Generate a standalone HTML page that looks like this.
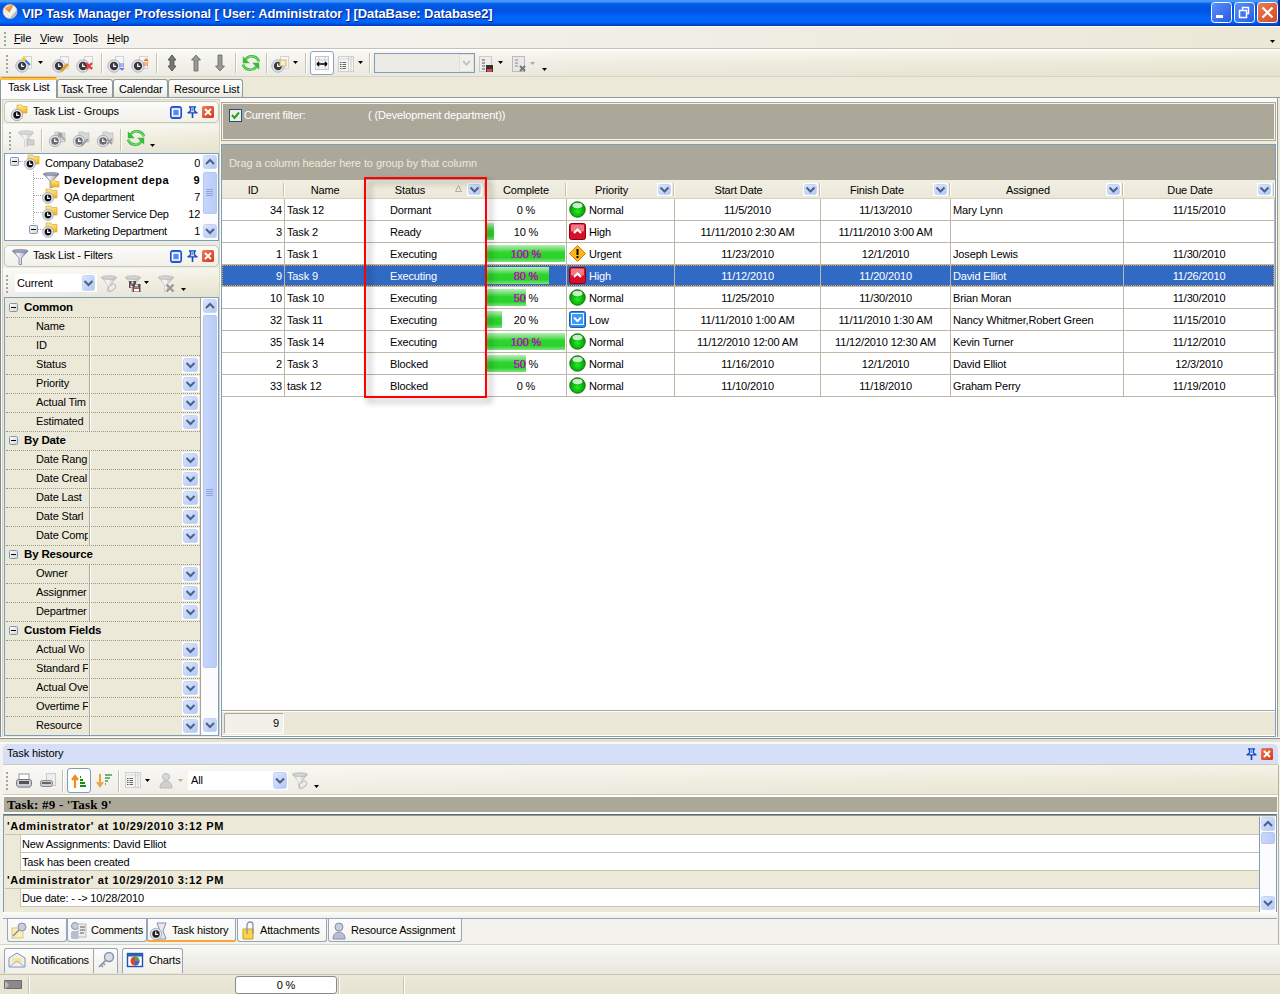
<!DOCTYPE html><html><head><meta charset="utf-8"><style>
html,body{margin:0;padding:0;}
body{width:1280px;height:994px;position:relative;overflow:hidden;background:#ece9d8;font-family:"Liberation Sans", sans-serif;font-size:11px;color:#000;letter-spacing:-0.15px;}
div{box-sizing:border-box;}
.t{position:absolute;white-space:nowrap;line-height:13px;}
</style></head><body>
<svg width="0" height="0" style="position:absolute"><defs><linearGradient id="ggray" x1="0" y1="0" x2="1" y2="0"><stop offset="0" stop-color="#c8c8c8"/><stop offset="0.4" stop-color="#f8f8f8"/><stop offset="1" stop-color="#b0b0b0"/></linearGradient><linearGradient id="gfold" x1="0" y1="0" x2="0" y2="1"><stop offset="0" stop-color="#fde9a8"/><stop offset="0.5" stop-color="#f8d050"/><stop offset="1" stop-color="#eeb018"/></linearGradient></defs></svg>
<div style="position:absolute;left:0px;top:0px;width:1280px;height:26px;background:linear-gradient(#4898f8 0,#4494f8 2px,#0a6af6 3px,#005ae2 5px,#0054e0 9px,#0058e8 13px,#0064f6 17px,#0066fa 22px,#0050dc 24px,#0036bc 26px)"></div>
<div style="position:absolute;left:1278px;top:0px;width:2px;height:26px;background:#0030a0"></div>
<svg style="position:absolute;left:3px;top:4px;overflow:visible" width="16" height="16"><defs><linearGradient id="apo" x1="0" y1="0" x2="0.6" y2="1"><stop offset="0" stop-color="#f8c890"/><stop offset="1" stop-color="#e07810"/></linearGradient></defs><circle cx="7" cy="7.5" r="7" fill="#f2f2f2" stroke="#f0c088" stroke-width="0.7"/><path d="M1.5 4.5Q5 0 10.5 1.2L6.5 8.5z" fill="url(#apo)"/><path d="M13.8 6A7 7 0 0 1 8 14.5L7 14z" fill="#b8b8b8"/><path d="M1 5.5L6.5 13.5" stroke="#d8d8d8" stroke-width="0.8"/></svg>
<div style="position:absolute;left:22px;top:6px;white-space:nowrap;font-weight:bold;font-size:13px;color:#fff;text-shadow:1px 1px 0 #0a1e7a;line-height:16px;letter-spacing:-0.09px;">VIP Task Manager Professional [ User: Administrator ] [DataBase: Database2]</div>
<svg style="position:absolute;left:1211px;top:2px;overflow:visible" width="21" height="21"><defs><linearGradient id="cap1211" x1="0" y1="0" x2="1" y2="1"><stop offset="0" stop-color="#5b92fc"/><stop offset="1" stop-color="#2559e4"/></linearGradient></defs><rect x="0.5" y="0.5" width="20" height="20" rx="3" fill="url(#cap1211)" stroke="#fff"/><rect x="5" y="13" width="7" height="3" fill="#fff"/></svg>
<svg style="position:absolute;left:1234px;top:2px;overflow:visible" width="21" height="21"><defs><linearGradient id="cap1234" x1="0" y1="0" x2="1" y2="1"><stop offset="0" stop-color="#5b92fc"/><stop offset="1" stop-color="#2559e4"/></linearGradient></defs><rect x="0.5" y="0.5" width="20" height="20" rx="3" fill="url(#cap1234)" stroke="#fff"/><rect x="5.5" y="8.5" width="7" height="7" fill="none" stroke="#fff" stroke-width="1.5"/><path d="M8.5 8.5V5.5H14.5V11.5H12.5" fill="none" stroke="#fff" stroke-width="1.5"/></svg>
<svg style="position:absolute;left:1257px;top:2px;overflow:visible" width="21" height="21"><defs><linearGradient id="cap1257" x1="0" y1="0" x2="1" y2="1"><stop offset="0" stop-color="#e97d5c"/><stop offset="1" stop-color="#d44a1c"/></linearGradient></defs><rect x="0.5" y="0.5" width="20" height="20" rx="3" fill="url(#cap1257)" stroke="#fff"/><path d="M5.5 5.5L15.5 15.5M15.5 5.5L5.5 15.5" stroke="#fff" stroke-width="2.2"/></svg>
<div style="position:absolute;left:0px;top:26px;width:1280px;height:22px;background:linear-gradient(90deg,#f4f3ee 0,#f1f0e9 40%,#ece8d7 100%)"></div>
<div style="position:absolute;left:0px;top:26px;width:1280px;height:1px;background:#fffcf0"></div>
<div style="position:absolute;left:0px;top:48px;width:1280px;height:1px;background:#c5c2b2"></div>
<svg style="position:absolute;left:4px;top:32px;overflow:visible" width="3" height="16"><rect x="0" y="0" width="2" height="2" fill="#a8a698"/><rect x="0" y="4" width="2" height="2" fill="#a8a698"/><rect x="0" y="8" width="2" height="2" fill="#a8a698"/><rect x="0" y="12" width="2" height="2" fill="#a8a698"/></svg>
<div style="position:absolute;left:14px;top:32px;white-space:nowrap;line-height:13px;"><u>F</u>ile</div>
<div style="position:absolute;left:40px;top:32px;white-space:nowrap;line-height:13px;"><u>V</u>iew</div>
<div style="position:absolute;left:73px;top:32px;white-space:nowrap;line-height:13px;"><u>T</u>ools</div>
<div style="position:absolute;left:107px;top:32px;white-space:nowrap;line-height:13px;"><u>H</u>elp</div>
<svg style="position:absolute;left:1270px;top:40px;overflow:visible" width="6" height="4"><path d="M0 0h5l-2.5 3z" fill="#000"/></svg>
<div style="position:absolute;left:0px;top:49px;width:1280px;height:28px;background:linear-gradient(#fff 0,#fff 1px,rgba(255,255,255,0.5) 2px,rgba(255,255,255,0) 50%,rgba(0,0,0,0.03) 100%),linear-gradient(90deg,#f4f3ee,#ebe8d4)"></div>
<div style="position:absolute;left:0px;top:76px;width:1280px;height:1px;background:#d8d4c2"></div>
<svg style="position:absolute;left:6px;top:55px;overflow:visible" width="3" height="20"><rect x="0" y="0" width="2" height="2" fill="#a8a698"/><rect x="0" y="4" width="2" height="2" fill="#a8a698"/><rect x="0" y="8" width="2" height="2" fill="#a8a698"/><rect x="0" y="12" width="2" height="2" fill="#a8a698"/><rect x="0" y="16" width="2" height="2" fill="#a8a698"/></svg>
<svg style="position:absolute;left:16px;top:55px;overflow:visible" width="18" height="18"><rect x="7.5" y="1.5" width="8" height="12" fill="#f6f6f6" stroke="#d3d3d3"/><circle cx="6" cy="11" r="6.2" fill="#e4e6ee" stroke="#a4a8bc" stroke-width="0.9"/><circle cx="6" cy="11" r="4.2" fill="#3a3a3a"/><path d="M5.7 8.4V11.3H8.2" stroke="#fff" stroke-width="1.2" fill="none"/><path d="M8 4l6 6" stroke="#3c78d8" stroke-width="2"/><circle cx="8" cy="4" r="2" fill="#f5d020"/></svg>
<svg style="position:absolute;left:38px;top:61px;overflow:visible" width="6" height="4"><path d="M0 0h5l-2.5 3z" fill="#000"/></svg>
<svg style="position:absolute;left:53px;top:55px;overflow:visible" width="18" height="18"><rect x="7.5" y="1.5" width="8" height="12" fill="#f6f6f6" stroke="#d3d3d3"/><circle cx="6" cy="11" r="6.2" fill="#e4e6ee" stroke="#a4a8bc" stroke-width="0.9"/><circle cx="6" cy="11" r="4.2" fill="#3a3a3a"/><path d="M5.7 8.4V11.3H8.2" stroke="#fff" stroke-width="1.2" fill="none"/><path d="M8 16l7-7" stroke="#e0a030" stroke-width="3"/></svg>
<svg style="position:absolute;left:77px;top:55px;overflow:visible" width="18" height="18"><rect x="7.5" y="1.5" width="8" height="12" fill="#f6f6f6" stroke="#d3d3d3"/><circle cx="6" cy="11" r="6.2" fill="#e4e6ee" stroke="#a4a8bc" stroke-width="0.9"/><circle cx="6" cy="11" r="4.2" fill="#3a3a3a"/><path d="M5.7 8.4V11.3H8.2" stroke="#fff" stroke-width="1.2" fill="none"/><path d="M9 8l6 6M15 8l-6 6" stroke="#e83838" stroke-width="2.2"/></svg>
<div style="position:absolute;left:101px;top:53px;width:2px;height:20px;background:#c5c2b2;border-right:1px solid #fff"></div>
<svg style="position:absolute;left:108px;top:55px;overflow:visible" width="18" height="18"><rect x="7.5" y="1.5" width="8" height="12" fill="#f6f6f6" stroke="#d3d3d3"/><circle cx="6" cy="11" r="6.2" fill="#e4e6ee" stroke="#a4a8bc" stroke-width="0.9"/><circle cx="6" cy="11" r="4.2" fill="#3a3a3a"/><path d="M5.7 8.4V11.3H8.2" stroke="#fff" stroke-width="1.2" fill="none"/><path d="M11 9h5M11 11h5M12 13l2 2l2-2" stroke="#6a7ae8" stroke-width="1.2" fill="#6a7ae8"/></svg>
<svg style="position:absolute;left:132px;top:55px;overflow:visible" width="18" height="18"><rect x="7.5" y="1.5" width="8" height="12" fill="#f6f6f6" stroke="#d3d3d3"/><circle cx="6" cy="11" r="6.2" fill="#e4e6ee" stroke="#a4a8bc" stroke-width="0.9"/><circle cx="6" cy="11" r="4.2" fill="#3a3a3a"/><path d="M5.7 8.4V11.3H8.2" stroke="#fff" stroke-width="1.2" fill="none"/><path d="M11 8h5M11 10h5M12 6l2-2l2 2" stroke="#f07a30" stroke-width="1.2" fill="#f07a30"/></svg>
<div style="position:absolute;left:156px;top:53px;width:2px;height:20px;background:#c5c2b2;border-right:1px solid #fff"></div>
<svg style="position:absolute;left:163px;top:54px;overflow:visible" width="18" height="18"><path d="M9 1l4 5h-2v6h2l-4 5l-4-5h2v-6h-2z" fill="#777" stroke="#444" stroke-width="0.8"/></svg>
<svg style="position:absolute;left:187px;top:54px;overflow:visible" width="18" height="18"><path d="M9 1l4.5 5h-2.5v11h-4v-11h-2.5z" fill="#999" stroke="#666" stroke-width="0.8"/></svg>
<svg style="position:absolute;left:211px;top:54px;overflow:visible" width="18" height="18"><path d="M9 17l4.5-5h-2.5v-11h-4v11h-2.5z" fill="#999" stroke="#666" stroke-width="0.8"/></svg>
<div style="position:absolute;left:235px;top:53px;width:2px;height:20px;background:#c5c2b2;border-right:1px solid #fff"></div>
<svg style="position:absolute;left:242px;top:54px;overflow:visible" width="18" height="18"><path d="M17 7.5C15 1.5 6 0 3.2 6.8" stroke="#3cb83c" stroke-width="2.6" fill="none"/><path d="M17 7.5C15 1.5 6 0 3.2 6.8" stroke="#7cf07c" stroke-width="0.9" fill="none"/><path d="M0.8 2.2V9.2H7.8z" fill="#3cb83c"/><path d="M1 10.5C3 16.5 12 18 14.8 11.2" stroke="#3cb83c" stroke-width="2.6" fill="none"/><path d="M1 10.5C3 16.5 12 18 14.8 11.2" stroke="#7cf07c" stroke-width="0.9" fill="none"/><path d="M17.2 15.8V8.8H10.2z" fill="#3cb83c"/></svg>
<div style="position:absolute;left:266px;top:53px;width:2px;height:20px;background:#c5c2b2;border-right:1px solid #fff"></div>
<svg style="position:absolute;left:273px;top:55px;overflow:visible" width="18" height="18"><rect x="7.5" y="1.5" width="8" height="12" fill="#f6f6f6" stroke="#d3d3d3"/><circle cx="5" cy="11" r="6.2" fill="#e4e6ee" stroke="#a4a8bc" stroke-width="0.9"/><circle cx="5" cy="11" r="4.2" fill="#3a3a3a"/><path d="M4.7 8.4V11.3H7.2" stroke="#fff" stroke-width="1.2" fill="none"/><rect x="7" y="5" width="6" height="6" fill="#f8f0c0" stroke="#c8b878"/></svg>
<svg style="position:absolute;left:293px;top:61px;overflow:visible" width="6" height="4"><path d="M0 0h5l-2.5 3z" fill="#000"/></svg>
<div style="position:absolute;left:305px;top:53px;width:2px;height:20px;background:#c5c2b2;border-right:1px solid #fff"></div>
<div style="position:absolute;left:310px;top:51px;width:24px;height:24px;border:1px solid #8aa4c8;border-radius:3px;background:#fff"></div>
<svg style="position:absolute;left:313px;top:54px;overflow:visible" width="18" height="18"><rect x="2.5" y="2.5" width="13" height="13" fill="#f4f4f4" stroke="#c8c8c8"/><path d="M2.5 6h13M6 2.5v13M12 2.5v13" stroke="#d0d0d0"/><path d="M4 10h10M4 10l2-2M4 10l2 2M14 10l-2-2M14 10l-2 2" stroke="#000" stroke-width="1.4"/></svg>
<svg style="position:absolute;left:338px;top:56px;overflow:visible" width="18" height="18"><rect x="0.5" y="0.5" width="15" height="15" fill="#f4f4f4" stroke="#d0d0d0"/><path d="M0.5 3h15" stroke="#d8d8d8"/><path d="M10.5 0.5v15M13 0.5v15" stroke="#d0d0d0"/><path d="M2 6.5h1.5M2 8.5h1.5M2 10.5h1.5M2 12.5h1.5" stroke="#555"/><path d="M4.5 6.5h3.5M4.5 8.5h3.5M4.5 10.5h3.5M4.5 12.5h3.5" stroke="#666"/></svg>
<svg style="position:absolute;left:358px;top:61px;overflow:visible" width="6" height="4"><path d="M0 0h5l-2.5 3z" fill="#000"/></svg>
<div style="position:absolute;left:369px;top:53px;width:2px;height:20px;background:#c5c2b2;border-right:1px solid #fff"></div>
<div style="position:absolute;left:374px;top:53px;width:101px;height:20px;border:1px solid #7f9db9;background:#ecebe5"></div>
<svg style="position:absolute;left:459px;top:54px;overflow:visible" width="15" height="18"><rect x="0.5" y="0.5" width="14" height="17" fill="#f1f0ea" stroke="#e0dfd8"/><path d="M4 7l3.5 3.5l3.5-3.5" stroke="#c6c5be" stroke-width="2" fill="none"/></svg>
<svg style="position:absolute;left:478px;top:55px;overflow:visible" width="18" height="18"><rect x="1.5" y="1.5" width="12" height="15" fill="#eee" stroke="#ccc"/><path d="M4 5h3M4 8h3M4 11h3M4 14h3" stroke="#555"/><rect x="8" y="10" width="7" height="7" fill="#333"/><rect x="9" y="14" width="5" height="3" fill="#e84040"/></svg>
<svg style="position:absolute;left:498px;top:61px;overflow:visible" width="6" height="4"><path d="M0 0h5l-2.5 3z" fill="#000"/></svg>
<svg style="position:absolute;left:511px;top:55px;overflow:visible" width="18" height="18"><rect x="1.5" y="1.5" width="12" height="15" fill="#e8e8e8" stroke="#bbb"/><path d="M4 5h3M4 8h3M4 11h3" stroke="#888"/><path d="M9 11l5 5M14 11l-5 5" stroke="#777" stroke-width="2"/></svg>
<svg style="position:absolute;left:530px;top:62px;overflow:visible" width="6" height="4"><path d="M0 0h5l-2.5 3z" fill="#aaa"/></svg>
<svg style="position:absolute;left:542px;top:68px;overflow:visible" width="6" height="4"><path d="M0 0h5l-2.5 3z" fill="#000"/></svg>
<div style="position:absolute;left:0px;top:97px;width:1280px;height:1px;background:#919b9c"></div>
<div style="position:absolute;left:57px;top:79px;width:56px;height:18px;background:linear-gradient(#fefefe,#f3f3ef 70%,#e8e7de);border:1px solid #919b9c;border-bottom:none;border-radius:3px 3px 0 0"></div>
<div style="position:absolute;left:61px;top:83px;white-space:nowrap;">Task Tree</div>
<div style="position:absolute;left:113px;top:79px;width:55px;height:18px;background:linear-gradient(#fefefe,#f3f3ef 70%,#e8e7de);border:1px solid #919b9c;border-bottom:none;border-radius:3px 3px 0 0"></div>
<div style="position:absolute;left:119px;top:83px;white-space:nowrap;">Calendar</div>
<div style="position:absolute;left:168px;top:79px;width:75px;height:18px;background:linear-gradient(#fefefe,#f3f3ef 70%,#e8e7de);border:1px solid #919b9c;border-bottom:none;border-radius:3px 3px 0 0"></div>
<div style="position:absolute;left:174px;top:83px;white-space:nowrap;">Resource List</div>
<div style="position:absolute;left:0px;top:77px;width:57px;height:21px;background:#fcfcfe;border:1px solid #919b9c;border-bottom:none;border-top:none;border-radius:3px 3px 0 0"></div>
<div style="position:absolute;left:0px;top:77px;width:57px;height:3px;background:linear-gradient(#e68b2c 0,#e68b2c 1px,#ffc040 1px,#ffc73c 3px);border-radius:3px 3px 0 0"></div>
<div style="position:absolute;left:8px;top:81px;white-space:nowrap;">Task List</div>
<div style="position:absolute;left:0px;top:98px;width:1280px;height:645px;background:#ece9d8"></div>
<div style="position:absolute;left:0px;top:97px;width:1278px;height:641px;border:1px solid #919b9c;border-bottom:none;background:#fbfbf9"></div>
<div style="position:absolute;left:0px;top:98px;width:1px;height:640px;background:#7f8c8c"></div>
<div style="position:absolute;left:1px;top:97px;width:55px;height:1px;background:#fcfcfe"></div>
<div style="position:absolute;left:2px;top:99px;width:218px;height:642px;border:1px solid #d5d2c2;background:#ecebe2"></div>
<div style="position:absolute;left:4px;top:101px;width:215px;height:22px;border:1px solid #c9c7b6;border-radius:5px;background:linear-gradient(#fcfcfa,#f1f0e9)"></div>
<svg style="position:absolute;left:11px;top:104px;overflow:visible" width="18" height="18"><path d="M6 1h4.5l1.2 1.5H16V9H6z" fill="url(#gfold)" stroke="#e0a820" stroke-width="0.7"/><circle cx="6" cy="11" r="5.7" fill="#e4e6ee" stroke="#a4a8bc" stroke-width="0.9"/><circle cx="6" cy="11" r="3.7" fill="#111"/><path d="M5.7 8.4V11.3H8.2" stroke="#fff" stroke-width="1.2" fill="none"/></svg>
<div style="position:absolute;left:33px;top:105px;white-space:nowrap;">Task List - Groups</div>
<svg style="position:absolute;left:170px;top:106px;overflow:visible" width="12" height="13"><rect x="0.5" y="0.5" width="11" height="12" rx="2" fill="#2a63e6" stroke="#1c49c9"/><rect x="2.5" y="3" width="7" height="7" fill="#5b8af0" stroke="#fff" stroke-width="1.6"/></svg>
<svg style="position:absolute;left:187px;top:106px;overflow:visible" width="11" height="13"><path d="M2.5 0.8h6l-1 1.2v3l2.5 1.8h-9l2.5-1.8v-3z" fill="#dfe8fc" stroke="#1846b8" stroke-width="1.3" stroke-linejoin="round"/><path d="M5.5 7v5" stroke="#1846b8" stroke-width="1.6"/><rect x="4.5" y="2" width="2" height="3" fill="#5aa0f0"/></svg>
<svg style="position:absolute;left:202px;top:106px;overflow:visible" width="12" height="12"><defs><linearGradient id="cl202106" x1="0" y1="0" x2="1" y2="1"><stop offset="0" stop-color="#f07a5c"/><stop offset="1" stop-color="#d4380f"/></linearGradient></defs><rect x="0" y="0" width="12" height="12" rx="1.5" fill="url(#cl202106)"/><path d="M3 3L9 9M9 3L3 9" stroke="#fff" stroke-width="2"/></svg>
<div style="position:absolute;left:3px;top:124px;width:216px;height:29px;background:linear-gradient(rgba(255,255,255,0.55),rgba(255,255,255,0) 60%,rgba(0,0,0,0.03)),linear-gradient(90deg,#f4f3ee,#ece9d6)"></div>
<svg style="position:absolute;left:9px;top:132px;overflow:visible" width="3" height="20"><rect x="0" y="0" width="2" height="2" fill="#a8a698"/><rect x="0" y="4" width="2" height="2" fill="#a8a698"/><rect x="0" y="8" width="2" height="2" fill="#a8a698"/><rect x="0" y="12" width="2" height="2" fill="#a8a698"/><rect x="0" y="16" width="2" height="2" fill="#a8a698"/></svg>
<svg style="position:absolute;left:18px;top:130px;overflow:visible" width="17" height="17"><g opacity="0.8"><path d="M0.5 2.5L6.5 9.5V16.5H9.5V9.5L15.5 2.5z" fill="url(#ggray)" stroke="#b8b8b8" stroke-width="0.6"/><ellipse cx="8" cy="2.6" rx="7.6" ry="1.8" fill="#d4d4d4" stroke="#a8a8a8" stroke-width="0.6"/></g><path d="M9 9h3l1 1h3v5h-7z" fill="#d0d0d0" stroke="#b0b0b0" stroke-width="0.6"/></svg>
<div style="position:absolute;left:41px;top:129px;width:2px;height:22px;background:#c5c2b2;border-right:1px solid #fff"></div>
<svg style="position:absolute;left:49px;top:130px;overflow:visible" width="18" height="18"><path d="M6 2h4l1 1h5v9h-10z" fill="#d8d8d8" stroke="#bbb" stroke-width="0.7"/><circle cx="6" cy="11" r="5.7" fill="#e4e6ee" stroke="#a4a8bc" stroke-width="0.9"/><circle cx="6" cy="11" r="3.7" fill="#6a6a6a"/><path d="M5.7 8.4V11.3H8.2" stroke="#fff" stroke-width="1.2" fill="none"/><path d="M9 3l4 4M13 3l-4 4M11 2v6M8 5h6" stroke="#888" stroke-width="0.8"/><path d="M11 5l5 5" stroke="#999" stroke-width="1.4"/></svg>
<svg style="position:absolute;left:73px;top:130px;overflow:visible" width="18" height="18"><path d="M6 2h4l1 1h5v9h-10z" fill="#d8d8d8" stroke="#bbb" stroke-width="0.7"/><circle cx="6" cy="11" r="5.7" fill="#e4e6ee" stroke="#a4a8bc" stroke-width="0.9"/><circle cx="6" cy="11" r="3.7" fill="#6a6a6a"/><path d="M5.7 8.4V11.3H8.2" stroke="#fff" stroke-width="1.2" fill="none"/><path d="M9 15l6-6" stroke="#a0a0a0" stroke-width="2.2"/><path d="M8.5 15.5l1-1" stroke="#555" stroke-width="1"/></svg>
<svg style="position:absolute;left:97px;top:130px;overflow:visible" width="18" height="18"><path d="M6 2h4l1 1h5v9h-10z" fill="#d8d8d8" stroke="#bbb" stroke-width="0.7"/><circle cx="6" cy="11" r="5.7" fill="#e4e6ee" stroke="#a4a8bc" stroke-width="0.9"/><circle cx="6" cy="11" r="3.7" fill="#6a6a6a"/><path d="M5.7 8.4V11.3H8.2" stroke="#fff" stroke-width="1.2" fill="none"/><path d="M10 9l5 5M15 9l-5 5" stroke="#a0a0a0" stroke-width="2"/></svg>
<div style="position:absolute;left:120px;top:129px;width:2px;height:22px;background:#c5c2b2;border-right:1px solid #fff"></div>
<svg style="position:absolute;left:127px;top:129px;overflow:visible" width="18" height="18"><path d="M17 7.5C15 1.5 6 0 3.2 6.8" stroke="#3cb83c" stroke-width="2.6" fill="none"/><path d="M17 7.5C15 1.5 6 0 3.2 6.8" stroke="#7cf07c" stroke-width="0.9" fill="none"/><path d="M0.8 2.2V9.2H7.8z" fill="#3cb83c"/><path d="M1 10.5C3 16.5 12 18 14.8 11.2" stroke="#3cb83c" stroke-width="2.6" fill="none"/><path d="M1 10.5C3 16.5 12 18 14.8 11.2" stroke="#7cf07c" stroke-width="0.9" fill="none"/><path d="M17.2 15.8V8.8H10.2z" fill="#3cb83c"/></svg>
<svg style="position:absolute;left:150px;top:144px;overflow:visible" width="6" height="4"><path d="M0 0h5l-2.5 3z" fill="#000"/></svg>
<div style="position:absolute;left:4px;top:153px;width:215px;height:88px;border:1px solid #7f9db9;background:#fff"></div>
<div style="position:absolute;left:33px;top:171px;width:1px;height:53px;border-left:1px dotted #a8a8a0"></div>
<div style="position:absolute;left:19px;top:161px;width:6px;height:1px;border-top:1px dotted #a8a8a0"></div>
<div style="position:absolute;left:34px;top:178px;width:9px;height:1px;border-top:1px dotted #a8a8a0"></div>
<div style="position:absolute;left:34px;top:195px;width:9px;height:1px;border-top:1px dotted #a8a8a0"></div>
<div style="position:absolute;left:34px;top:212px;width:9px;height:1px;border-top:1px dotted #a8a8a0"></div>
<div style="position:absolute;left:38px;top:229px;width:5px;height:1px;border-top:1px dotted #a8a8a0"></div>
<svg style="position:absolute;left:10px;top:157px;overflow:visible" width="9" height="9"><defs><linearGradient id="ex10_157" x1="0" y1="0" x2="1" y2="1"><stop offset="0" stop-color="#fff"/><stop offset="1" stop-color="#d8d4c4"/></linearGradient></defs><rect x="0.5" y="0.5" width="8" height="8" rx="1" fill="url(#ex10_157)" stroke="#7a96c0"/><path d="M2 4.5h5" stroke="#000" stroke-width="1"/></svg>
<svg style="position:absolute;left:20px;top:150px;overflow:visible" width="20" height="20"><path d="M8 5h4.95l1.2 1.5H19V14H8z" fill="url(#gfold)" stroke="#e0a820" stroke-width="0.7"/><circle cx="10" cy="14" r="5.4" fill="#e4e6ee" stroke="#a4a8bc" stroke-width="0.9"/><circle cx="10" cy="14" r="3.4000000000000004" fill="#111"/><path d="M9.7 11.4V14.3H12.2" stroke="#fff" stroke-width="1.2" fill="none"/></svg>
<div style="position:absolute;left:45px;top:157px;white-space:nowrap;letter-spacing:-0.3px;width:150px;overflow:hidden;">Company Database2</div>
<div style="position:absolute;left:150px;top:157px;white-space:nowrap;letter-spacing:-0.3px;width:50px;overflow:hidden;text-align:right;">0</div>
<svg style="position:absolute;left:43px;top:171px;overflow:visible" width="17" height="17"><defs><linearGradient id="fnt" x1="0" y1="0" x2="1" y2="0"><stop offset="0" stop-color="#8a90a8"/><stop offset="0.35" stop-color="#f4f6fc"/><stop offset="0.7" stop-color="#b8bed0"/><stop offset="1" stop-color="#6a7088"/></linearGradient></defs><path d="M0.5 3L7 10v6.5h2.5V10L16 3z" fill="url(#fnt)" stroke="#6a7088" stroke-width="0.7"/><ellipse cx="8.2" cy="3" rx="7.8" ry="1.6" fill="#9aa0b8" stroke="#6a7088" stroke-width="0.5"/><path d="M8 9h3.6l1.2 1.5H16V16H8z" fill="url(#gfold)" stroke="#e0a820" stroke-width="0.7"/></svg>
<div style="position:absolute;left:64px;top:174px;white-space:nowrap;font-weight:bold;letter-spacing:0.45px;width:105px;overflow:hidden;">Development depa</div>
<div style="position:absolute;left:150px;top:174px;white-space:nowrap;font-weight:bold;letter-spacing:0.45px;width:50px;overflow:hidden;text-align:right;">9</div>
<svg style="position:absolute;left:38px;top:184px;overflow:visible" width="20" height="20"><path d="M8 5h4.95l1.2 1.5H19V14H8z" fill="url(#gfold)" stroke="#e0a820" stroke-width="0.7"/><circle cx="10" cy="14" r="5.4" fill="#e4e6ee" stroke="#a4a8bc" stroke-width="0.9"/><circle cx="10" cy="14" r="3.4000000000000004" fill="#111"/><path d="M9.7 11.4V14.3H12.2" stroke="#fff" stroke-width="1.2" fill="none"/></svg>
<div style="position:absolute;left:64px;top:191px;white-space:nowrap;letter-spacing:-0.3px;width:105px;overflow:hidden;">QA department</div>
<div style="position:absolute;left:150px;top:191px;white-space:nowrap;letter-spacing:-0.3px;width:50px;overflow:hidden;text-align:right;">7</div>
<svg style="position:absolute;left:38px;top:201px;overflow:visible" width="20" height="20"><path d="M8 5h4.95l1.2 1.5H19V14H8z" fill="url(#gfold)" stroke="#e0a820" stroke-width="0.7"/><circle cx="10" cy="14" r="5.4" fill="#e4e6ee" stroke="#a4a8bc" stroke-width="0.9"/><circle cx="10" cy="14" r="3.4000000000000004" fill="#111"/><path d="M9.7 11.4V14.3H12.2" stroke="#fff" stroke-width="1.2" fill="none"/></svg>
<div style="position:absolute;left:64px;top:208px;white-space:nowrap;letter-spacing:-0.3px;width:105px;overflow:hidden;">Customer Service Dep</div>
<div style="position:absolute;left:150px;top:208px;white-space:nowrap;letter-spacing:-0.3px;width:50px;overflow:hidden;text-align:right;">12</div>
<svg style="position:absolute;left:29px;top:225px;overflow:visible" width="9" height="9"><defs><linearGradient id="ex29_225" x1="0" y1="0" x2="1" y2="1"><stop offset="0" stop-color="#fff"/><stop offset="1" stop-color="#d8d4c4"/></linearGradient></defs><rect x="0.5" y="0.5" width="8" height="8" rx="1" fill="url(#ex29_225)" stroke="#7a96c0"/><path d="M2 4.5h5" stroke="#000" stroke-width="1"/></svg>
<svg style="position:absolute;left:38px;top:218px;overflow:visible" width="20" height="20"><path d="M8 5h4.95l1.2 1.5H19V14H8z" fill="url(#gfold)" stroke="#e0a820" stroke-width="0.7"/><circle cx="10" cy="14" r="5.4" fill="#e4e6ee" stroke="#a4a8bc" stroke-width="0.9"/><circle cx="10" cy="14" r="3.4000000000000004" fill="#111"/><path d="M9.7 11.4V14.3H12.2" stroke="#fff" stroke-width="1.2" fill="none"/></svg>
<div style="position:absolute;left:64px;top:225px;white-space:nowrap;letter-spacing:-0.3px;width:105px;overflow:hidden;">Marketing Department</div>
<div style="position:absolute;left:150px;top:225px;white-space:nowrap;letter-spacing:-0.3px;width:50px;overflow:hidden;text-align:right;">1</div>
<div style="position:absolute;left:202px;top:154px;width:16px;height:86px;background:#fcfcfe"></div>
<svg style="position:absolute;left:203px;top:155px;overflow:visible" width="14" height="14"><defs><linearGradient id="g203_155" x1="0" y1="0" x2="1" y2="1"><stop offset="0" stop-color="#dde7fe"/><stop offset="1" stop-color="#b0c6f5"/></linearGradient></defs><rect x="0.5" y="0.5" width="13" height="13" rx="2" fill="url(#g203_155)" stroke="#c5d4f6"/><path d="M3.0 9.0l4-4l4 4" stroke="#4d6185" stroke-width="2" fill="none"/></svg>
<div style="position:absolute;left:203px;top:172px;width:14px;height:42px;border:1px solid #b6c8f2;border-radius:2px;background:linear-gradient(90deg,#c8d6fb,#b9cbf7)"></div>
<svg style="position:absolute;left:206px;top:189px;overflow:visible" width="8" height="8"><path d="M0 0.5h7M0 2.5h7M0 4.5h7M0 6.5h7" stroke="#8ea6e0" stroke-width="1"/></svg>
<svg style="position:absolute;left:203px;top:224px;overflow:visible" width="14" height="14"><defs><linearGradient id="g203_224" x1="0" y1="0" x2="1" y2="1"><stop offset="0" stop-color="#dde7fe"/><stop offset="1" stop-color="#b0c6f5"/></linearGradient></defs><rect x="0.5" y="0.5" width="13" height="13" rx="2" fill="url(#g203_224)" stroke="#c5d4f6"/><path d="M3.0 5.0l4 4l4-4" stroke="#4d6185" stroke-width="2" fill="none"/></svg>
<div style="position:absolute;left:4px;top:245px;width:215px;height:22px;border:1px solid #c9c7b6;border-radius:5px;background:linear-gradient(#fcfcfa,#f1f0e9)"></div>
<svg style="position:absolute;left:12px;top:248px;overflow:visible" width="17" height="18"><defs><linearGradient id="fnh" x1="0" y1="0" x2="1" y2="0"><stop offset="0" stop-color="#8a90a8"/><stop offset="0.35" stop-color="#f4f6fc"/><stop offset="0.7" stop-color="#b8bed0"/><stop offset="1" stop-color="#6a7088"/></linearGradient></defs><path d="M0.5 3L7 10v6.5h2.5V10L16 3z" fill="url(#fnh)" stroke="#6a7088" stroke-width="0.7"/><ellipse cx="8.2" cy="3" rx="7.8" ry="1.6" fill="#9aa0b8" stroke="#6a7088" stroke-width="0.5"/></svg>
<div style="position:absolute;left:33px;top:249px;white-space:nowrap;">Task List - Filters</div>
<svg style="position:absolute;left:170px;top:250px;overflow:visible" width="12" height="13"><rect x="0.5" y="0.5" width="11" height="12" rx="2" fill="#2a63e6" stroke="#1c49c9"/><rect x="2.5" y="3" width="7" height="7" fill="#5b8af0" stroke="#fff" stroke-width="1.6"/></svg>
<svg style="position:absolute;left:187px;top:250px;overflow:visible" width="11" height="13"><path d="M2.5 0.8h6l-1 1.2v3l2.5 1.8h-9l2.5-1.8v-3z" fill="#dfe8fc" stroke="#1846b8" stroke-width="1.3" stroke-linejoin="round"/><path d="M5.5 7v5" stroke="#1846b8" stroke-width="1.6"/><rect x="4.5" y="2" width="2" height="3" fill="#5aa0f0"/></svg>
<svg style="position:absolute;left:202px;top:250px;overflow:visible" width="12" height="12"><defs><linearGradient id="cl202250" x1="0" y1="0" x2="1" y2="1"><stop offset="0" stop-color="#f07a5c"/><stop offset="1" stop-color="#d4380f"/></linearGradient></defs><rect x="0" y="0" width="12" height="12" rx="1.5" fill="url(#cl202250)"/><path d="M3 3L9 9M9 3L3 9" stroke="#fff" stroke-width="2"/></svg>
<div style="position:absolute;left:3px;top:268px;width:216px;height:29px;background:linear-gradient(rgba(255,255,255,0.55),rgba(255,255,255,0) 60%,rgba(0,0,0,0.03)),linear-gradient(90deg,#f4f3ee,#ece9d6)"></div>
<svg style="position:absolute;left:6px;top:275px;overflow:visible" width="3" height="20"><rect x="0" y="0" width="2" height="2" fill="#a8a698"/><rect x="0" y="4" width="2" height="2" fill="#a8a698"/><rect x="0" y="8" width="2" height="2" fill="#a8a698"/><rect x="0" y="12" width="2" height="2" fill="#a8a698"/><rect x="0" y="16" width="2" height="2" fill="#a8a698"/></svg>
<div style="position:absolute;left:15px;top:274px;width:82px;height:18px;background:#fff"></div>
<div style="position:absolute;left:17px;top:277px;white-space:nowrap;">Current</div>
<svg style="position:absolute;left:82px;top:275px;overflow:visible" width="13" height="16"><defs><linearGradient id="g82_275" x1="0" y1="0" x2="1" y2="1"><stop offset="0" stop-color="#dde7fe"/><stop offset="1" stop-color="#b0c6f5"/></linearGradient></defs><rect x="0.5" y="0.5" width="12" height="15" rx="2" fill="url(#g82_275)" stroke="#c5d4f6"/><path d="M2.5 6.0l4 4l4-4" stroke="#4d6185" stroke-width="2" fill="none"/></svg>
<svg style="position:absolute;left:101px;top:275px;overflow:visible" width="17" height="17"><g opacity="1.0"><path d="M0.5 2.5L6.5 9.5V16.5H9.5V9.5L15.5 2.5z" fill="url(#ggray)" stroke="#b8b8b8" stroke-width="0.6"/><ellipse cx="8" cy="2.6" rx="7.6" ry="1.8" fill="#d4d4d4" stroke="#a8a8a8" stroke-width="0.6"/></g><rect x="7" y="10" width="8" height="5" rx="2" transform="rotate(-40 11 12.5)" fill="#ececec" stroke="#b8b8b8"/></svg>
<svg style="position:absolute;left:125px;top:275px;overflow:visible" width="17" height="17"><g opacity="1.0"><path d="M0.5 2.5L6.5 9.5V16.5H9.5V9.5L15.5 2.5z" fill="url(#ggray)" stroke="#b8b8b8" stroke-width="0.6"/><ellipse cx="8" cy="2.6" rx="7.6" ry="1.8" fill="#d4d4d4" stroke="#a8a8a8" stroke-width="0.6"/></g><rect x="4" y="6" width="7" height="7" fill="#505050"/><rect x="5.5" y="9.5" width="4" height="3" fill="#fff"/><rect x="5.5" y="9.5" width="4" height="1.5" fill="#e84040"/><rect x="6.5" y="6.5" width="2" height="2" fill="#e8e8e8"/><rect x="7.5" y="9" width="8" height="8" fill="#505050"/><rect x="9.0" y="12.5" width="5" height="4" fill="#fff"/><rect x="9.0" y="12.5" width="5" height="1.5" fill="#e84040"/><rect x="10.0" y="9.5" width="3" height="2" fill="#e8e8e8"/></svg>
<svg style="position:absolute;left:144px;top:281px;overflow:visible" width="6" height="4"><path d="M0 0h5l-2.5 3z" fill="#000"/></svg>
<svg style="position:absolute;left:158px;top:275px;overflow:visible" width="17" height="17"><g opacity="1.0"><path d="M0.5 2.5L6.5 9.5V16.5H9.5V9.5L15.5 2.5z" fill="url(#ggray)" stroke="#b8b8b8" stroke-width="0.6"/><ellipse cx="8" cy="2.6" rx="7.6" ry="1.8" fill="#d4d4d4" stroke="#a8a8a8" stroke-width="0.6"/></g><path d="M8.5 9.5L15.5 16.5M15.5 9.5L8.5 16.5" stroke="#9a9a9a" stroke-width="2.4"/></svg>
<svg style="position:absolute;left:181px;top:288px;overflow:visible" width="6" height="4"><path d="M0 0h5l-2.5 3z" fill="#000"/></svg>
<div style="position:absolute;left:4px;top:297px;width:215px;height:439px;border:1px solid #7f9db9;background:#ece9d8"></div>
<div style="position:absolute;left:200px;top:298px;width:1px;height:437px;background:#a8a490"></div>
<div style="position:absolute;left:201px;top:298px;width:17px;height:437px;background:#fcfcfe"></div>
<svg style="position:absolute;left:203px;top:299px;overflow:visible" width="14" height="14"><defs><linearGradient id="g203_299" x1="0" y1="0" x2="1" y2="1"><stop offset="0" stop-color="#dde7fe"/><stop offset="1" stop-color="#b0c6f5"/></linearGradient></defs><rect x="0.5" y="0.5" width="13" height="13" rx="2" fill="url(#g203_299)" stroke="#c5d4f6"/><path d="M3.0 9.0l4-4l4 4" stroke="#4d6185" stroke-width="2" fill="none"/></svg>
<div style="position:absolute;left:203px;top:315px;width:14px;height:353px;border:1px solid #b6c8f2;border-radius:2px;background:linear-gradient(90deg,#c8d6fb,#b9cbf7)"></div>
<svg style="position:absolute;left:206px;top:489px;overflow:visible" width="8" height="8"><path d="M0 0.5h7M0 2.5h7M0 4.5h7M0 6.5h7" stroke="#8ea6e0" stroke-width="1"/></svg>
<svg style="position:absolute;left:203px;top:718px;overflow:visible" width="14" height="14"><defs><linearGradient id="g203_718" x1="0" y1="0" x2="1" y2="1"><stop offset="0" stop-color="#dde7fe"/><stop offset="1" stop-color="#b0c6f5"/></linearGradient></defs><rect x="0.5" y="0.5" width="13" height="13" rx="2" fill="url(#g203_718)" stroke="#c5d4f6"/><path d="M3.0 5.0l4 4l4-4" stroke="#4d6185" stroke-width="2" fill="none"/></svg>
<svg style="position:absolute;left:9px;top:303px;overflow:visible" width="9" height="9"><defs><linearGradient id="ex9_303" x1="0" y1="0" x2="1" y2="1"><stop offset="0" stop-color="#fff"/><stop offset="1" stop-color="#d8d4c4"/></linearGradient></defs><rect x="0.5" y="0.5" width="8" height="8" rx="1" fill="url(#ex9_303)" stroke="#7a96c0"/><path d="M2 4.5h5" stroke="#000" stroke-width="1"/></svg>
<div style="position:absolute;left:24px;top:301px;white-space:nowrap;font-weight:bold;font-size:11.5px;">Common</div>
<div style="position:absolute;left:6px;top:317px;width:194px;height:1px;border-top:1px dotted #9c9888"></div>
<div style="position:absolute;left:89px;top:318px;width:2px;height:18px;background:#aca899;border-right:1px solid #fff"></div>
<div style="position:absolute;left:36px;top:320px;white-space:nowrap;width:52px;overflow:hidden;">Name</div>
<div style="position:absolute;left:6px;top:336px;width:194px;height:1px;border-top:1px dotted #9c9888"></div>
<div style="position:absolute;left:89px;top:337px;width:2px;height:18px;background:#aca899;border-right:1px solid #fff"></div>
<div style="position:absolute;left:36px;top:339px;white-space:nowrap;width:52px;overflow:hidden;">ID</div>
<div style="position:absolute;left:6px;top:355px;width:194px;height:1px;border-top:1px dotted #9c9888"></div>
<div style="position:absolute;left:89px;top:356px;width:2px;height:18px;background:#aca899;border-right:1px solid #fff"></div>
<div style="position:absolute;left:36px;top:358px;white-space:nowrap;width:52px;overflow:hidden;">Status</div>
<div style="position:absolute;left:182px;top:357px;width:17px;height:16px;background:#fff"></div>
<svg style="position:absolute;left:183px;top:358px;overflow:visible" width="15" height="14"><defs><linearGradient id="g183_358" x1="0" y1="0" x2="1" y2="1"><stop offset="0" stop-color="#dde7fe"/><stop offset="1" stop-color="#b0c6f5"/></linearGradient></defs><rect x="0.5" y="0.5" width="14" height="13" rx="2" fill="url(#g183_358)" stroke="#c5d4f6"/><path d="M3.5 5.0l4 4l4-4" stroke="#4d6185" stroke-width="2" fill="none"/></svg>
<div style="position:absolute;left:6px;top:374px;width:194px;height:1px;border-top:1px dotted #9c9888"></div>
<div style="position:absolute;left:89px;top:375px;width:2px;height:18px;background:#aca899;border-right:1px solid #fff"></div>
<div style="position:absolute;left:36px;top:377px;white-space:nowrap;width:52px;overflow:hidden;">Priority</div>
<div style="position:absolute;left:182px;top:376px;width:17px;height:16px;background:#fff"></div>
<svg style="position:absolute;left:183px;top:377px;overflow:visible" width="15" height="14"><defs><linearGradient id="g183_377" x1="0" y1="0" x2="1" y2="1"><stop offset="0" stop-color="#dde7fe"/><stop offset="1" stop-color="#b0c6f5"/></linearGradient></defs><rect x="0.5" y="0.5" width="14" height="13" rx="2" fill="url(#g183_377)" stroke="#c5d4f6"/><path d="M3.5 5.0l4 4l4-4" stroke="#4d6185" stroke-width="2" fill="none"/></svg>
<div style="position:absolute;left:6px;top:393px;width:194px;height:1px;border-top:1px dotted #9c9888"></div>
<div style="position:absolute;left:89px;top:394px;width:2px;height:18px;background:#aca899;border-right:1px solid #fff"></div>
<div style="position:absolute;left:36px;top:396px;white-space:nowrap;width:52px;overflow:hidden;">Actual Tim</div>
<div style="position:absolute;left:182px;top:395px;width:17px;height:16px;background:#fff"></div>
<svg style="position:absolute;left:183px;top:396px;overflow:visible" width="15" height="14"><defs><linearGradient id="g183_396" x1="0" y1="0" x2="1" y2="1"><stop offset="0" stop-color="#dde7fe"/><stop offset="1" stop-color="#b0c6f5"/></linearGradient></defs><rect x="0.5" y="0.5" width="14" height="13" rx="2" fill="url(#g183_396)" stroke="#c5d4f6"/><path d="M3.5 5.0l4 4l4-4" stroke="#4d6185" stroke-width="2" fill="none"/></svg>
<div style="position:absolute;left:6px;top:412px;width:194px;height:1px;border-top:1px dotted #9c9888"></div>
<div style="position:absolute;left:89px;top:413px;width:2px;height:18px;background:#aca899;border-right:1px solid #fff"></div>
<div style="position:absolute;left:36px;top:415px;white-space:nowrap;width:52px;overflow:hidden;">Estimated</div>
<div style="position:absolute;left:182px;top:414px;width:17px;height:16px;background:#fff"></div>
<svg style="position:absolute;left:183px;top:415px;overflow:visible" width="15" height="14"><defs><linearGradient id="g183_415" x1="0" y1="0" x2="1" y2="1"><stop offset="0" stop-color="#dde7fe"/><stop offset="1" stop-color="#b0c6f5"/></linearGradient></defs><rect x="0.5" y="0.5" width="14" height="13" rx="2" fill="url(#g183_415)" stroke="#c5d4f6"/><path d="M3.5 5.0l4 4l4-4" stroke="#4d6185" stroke-width="2" fill="none"/></svg>
<div style="position:absolute;left:6px;top:431px;width:194px;height:1px;border-top:1px dotted #9c9888"></div>
<svg style="position:absolute;left:9px;top:436px;overflow:visible" width="9" height="9"><defs><linearGradient id="ex9_436" x1="0" y1="0" x2="1" y2="1"><stop offset="0" stop-color="#fff"/><stop offset="1" stop-color="#d8d4c4"/></linearGradient></defs><rect x="0.5" y="0.5" width="8" height="8" rx="1" fill="url(#ex9_436)" stroke="#7a96c0"/><path d="M2 4.5h5" stroke="#000" stroke-width="1"/></svg>
<div style="position:absolute;left:24px;top:434px;white-space:nowrap;font-weight:bold;font-size:11.5px;">By Date</div>
<div style="position:absolute;left:6px;top:450px;width:194px;height:1px;border-top:1px dotted #9c9888"></div>
<div style="position:absolute;left:89px;top:451px;width:2px;height:18px;background:#aca899;border-right:1px solid #fff"></div>
<div style="position:absolute;left:36px;top:453px;white-space:nowrap;width:52px;overflow:hidden;">Date Rang</div>
<div style="position:absolute;left:182px;top:452px;width:17px;height:16px;background:#fff"></div>
<svg style="position:absolute;left:183px;top:453px;overflow:visible" width="15" height="14"><defs><linearGradient id="g183_453" x1="0" y1="0" x2="1" y2="1"><stop offset="0" stop-color="#dde7fe"/><stop offset="1" stop-color="#b0c6f5"/></linearGradient></defs><rect x="0.5" y="0.5" width="14" height="13" rx="2" fill="url(#g183_453)" stroke="#c5d4f6"/><path d="M3.5 5.0l4 4l4-4" stroke="#4d6185" stroke-width="2" fill="none"/></svg>
<div style="position:absolute;left:6px;top:469px;width:194px;height:1px;border-top:1px dotted #9c9888"></div>
<div style="position:absolute;left:89px;top:470px;width:2px;height:18px;background:#aca899;border-right:1px solid #fff"></div>
<div style="position:absolute;left:36px;top:472px;white-space:nowrap;width:52px;overflow:hidden;">Date Creal</div>
<div style="position:absolute;left:182px;top:471px;width:17px;height:16px;background:#fff"></div>
<svg style="position:absolute;left:183px;top:472px;overflow:visible" width="15" height="14"><defs><linearGradient id="g183_472" x1="0" y1="0" x2="1" y2="1"><stop offset="0" stop-color="#dde7fe"/><stop offset="1" stop-color="#b0c6f5"/></linearGradient></defs><rect x="0.5" y="0.5" width="14" height="13" rx="2" fill="url(#g183_472)" stroke="#c5d4f6"/><path d="M3.5 5.0l4 4l4-4" stroke="#4d6185" stroke-width="2" fill="none"/></svg>
<div style="position:absolute;left:6px;top:488px;width:194px;height:1px;border-top:1px dotted #9c9888"></div>
<div style="position:absolute;left:89px;top:489px;width:2px;height:18px;background:#aca899;border-right:1px solid #fff"></div>
<div style="position:absolute;left:36px;top:491px;white-space:nowrap;width:52px;overflow:hidden;">Date Last</div>
<div style="position:absolute;left:182px;top:490px;width:17px;height:16px;background:#fff"></div>
<svg style="position:absolute;left:183px;top:491px;overflow:visible" width="15" height="14"><defs><linearGradient id="g183_491" x1="0" y1="0" x2="1" y2="1"><stop offset="0" stop-color="#dde7fe"/><stop offset="1" stop-color="#b0c6f5"/></linearGradient></defs><rect x="0.5" y="0.5" width="14" height="13" rx="2" fill="url(#g183_491)" stroke="#c5d4f6"/><path d="M3.5 5.0l4 4l4-4" stroke="#4d6185" stroke-width="2" fill="none"/></svg>
<div style="position:absolute;left:6px;top:507px;width:194px;height:1px;border-top:1px dotted #9c9888"></div>
<div style="position:absolute;left:89px;top:508px;width:2px;height:18px;background:#aca899;border-right:1px solid #fff"></div>
<div style="position:absolute;left:36px;top:510px;white-space:nowrap;width:52px;overflow:hidden;">Date Starl</div>
<div style="position:absolute;left:182px;top:509px;width:17px;height:16px;background:#fff"></div>
<svg style="position:absolute;left:183px;top:510px;overflow:visible" width="15" height="14"><defs><linearGradient id="g183_510" x1="0" y1="0" x2="1" y2="1"><stop offset="0" stop-color="#dde7fe"/><stop offset="1" stop-color="#b0c6f5"/></linearGradient></defs><rect x="0.5" y="0.5" width="14" height="13" rx="2" fill="url(#g183_510)" stroke="#c5d4f6"/><path d="M3.5 5.0l4 4l4-4" stroke="#4d6185" stroke-width="2" fill="none"/></svg>
<div style="position:absolute;left:6px;top:526px;width:194px;height:1px;border-top:1px dotted #9c9888"></div>
<div style="position:absolute;left:89px;top:527px;width:2px;height:18px;background:#aca899;border-right:1px solid #fff"></div>
<div style="position:absolute;left:36px;top:529px;white-space:nowrap;width:52px;overflow:hidden;">Date Comp</div>
<div style="position:absolute;left:182px;top:528px;width:17px;height:16px;background:#fff"></div>
<svg style="position:absolute;left:183px;top:529px;overflow:visible" width="15" height="14"><defs><linearGradient id="g183_529" x1="0" y1="0" x2="1" y2="1"><stop offset="0" stop-color="#dde7fe"/><stop offset="1" stop-color="#b0c6f5"/></linearGradient></defs><rect x="0.5" y="0.5" width="14" height="13" rx="2" fill="url(#g183_529)" stroke="#c5d4f6"/><path d="M3.5 5.0l4 4l4-4" stroke="#4d6185" stroke-width="2" fill="none"/></svg>
<div style="position:absolute;left:6px;top:545px;width:194px;height:1px;border-top:1px dotted #9c9888"></div>
<svg style="position:absolute;left:9px;top:550px;overflow:visible" width="9" height="9"><defs><linearGradient id="ex9_550" x1="0" y1="0" x2="1" y2="1"><stop offset="0" stop-color="#fff"/><stop offset="1" stop-color="#d8d4c4"/></linearGradient></defs><rect x="0.5" y="0.5" width="8" height="8" rx="1" fill="url(#ex9_550)" stroke="#7a96c0"/><path d="M2 4.5h5" stroke="#000" stroke-width="1"/></svg>
<div style="position:absolute;left:24px;top:548px;white-space:nowrap;font-weight:bold;font-size:11.5px;">By Resource</div>
<div style="position:absolute;left:6px;top:564px;width:194px;height:1px;border-top:1px dotted #9c9888"></div>
<div style="position:absolute;left:89px;top:565px;width:2px;height:18px;background:#aca899;border-right:1px solid #fff"></div>
<div style="position:absolute;left:36px;top:567px;white-space:nowrap;width:52px;overflow:hidden;">Owner</div>
<div style="position:absolute;left:182px;top:566px;width:17px;height:16px;background:#fff"></div>
<svg style="position:absolute;left:183px;top:567px;overflow:visible" width="15" height="14"><defs><linearGradient id="g183_567" x1="0" y1="0" x2="1" y2="1"><stop offset="0" stop-color="#dde7fe"/><stop offset="1" stop-color="#b0c6f5"/></linearGradient></defs><rect x="0.5" y="0.5" width="14" height="13" rx="2" fill="url(#g183_567)" stroke="#c5d4f6"/><path d="M3.5 5.0l4 4l4-4" stroke="#4d6185" stroke-width="2" fill="none"/></svg>
<div style="position:absolute;left:6px;top:583px;width:194px;height:1px;border-top:1px dotted #9c9888"></div>
<div style="position:absolute;left:89px;top:584px;width:2px;height:18px;background:#aca899;border-right:1px solid #fff"></div>
<div style="position:absolute;left:36px;top:586px;white-space:nowrap;width:52px;overflow:hidden;">Assignmer</div>
<div style="position:absolute;left:182px;top:585px;width:17px;height:16px;background:#fff"></div>
<svg style="position:absolute;left:183px;top:586px;overflow:visible" width="15" height="14"><defs><linearGradient id="g183_586" x1="0" y1="0" x2="1" y2="1"><stop offset="0" stop-color="#dde7fe"/><stop offset="1" stop-color="#b0c6f5"/></linearGradient></defs><rect x="0.5" y="0.5" width="14" height="13" rx="2" fill="url(#g183_586)" stroke="#c5d4f6"/><path d="M3.5 5.0l4 4l4-4" stroke="#4d6185" stroke-width="2" fill="none"/></svg>
<div style="position:absolute;left:6px;top:602px;width:194px;height:1px;border-top:1px dotted #9c9888"></div>
<div style="position:absolute;left:89px;top:603px;width:2px;height:18px;background:#aca899;border-right:1px solid #fff"></div>
<div style="position:absolute;left:36px;top:605px;white-space:nowrap;width:52px;overflow:hidden;">Departmer</div>
<div style="position:absolute;left:182px;top:604px;width:17px;height:16px;background:#fff"></div>
<svg style="position:absolute;left:183px;top:605px;overflow:visible" width="15" height="14"><defs><linearGradient id="g183_605" x1="0" y1="0" x2="1" y2="1"><stop offset="0" stop-color="#dde7fe"/><stop offset="1" stop-color="#b0c6f5"/></linearGradient></defs><rect x="0.5" y="0.5" width="14" height="13" rx="2" fill="url(#g183_605)" stroke="#c5d4f6"/><path d="M3.5 5.0l4 4l4-4" stroke="#4d6185" stroke-width="2" fill="none"/></svg>
<div style="position:absolute;left:6px;top:621px;width:194px;height:1px;border-top:1px dotted #9c9888"></div>
<svg style="position:absolute;left:9px;top:626px;overflow:visible" width="9" height="9"><defs><linearGradient id="ex9_626" x1="0" y1="0" x2="1" y2="1"><stop offset="0" stop-color="#fff"/><stop offset="1" stop-color="#d8d4c4"/></linearGradient></defs><rect x="0.5" y="0.5" width="8" height="8" rx="1" fill="url(#ex9_626)" stroke="#7a96c0"/><path d="M2 4.5h5" stroke="#000" stroke-width="1"/></svg>
<div style="position:absolute;left:24px;top:624px;white-space:nowrap;font-weight:bold;font-size:11.5px;">Custom Fields</div>
<div style="position:absolute;left:6px;top:640px;width:194px;height:1px;border-top:1px dotted #9c9888"></div>
<div style="position:absolute;left:89px;top:641px;width:2px;height:18px;background:#aca899;border-right:1px solid #fff"></div>
<div style="position:absolute;left:36px;top:643px;white-space:nowrap;width:52px;overflow:hidden;">Actual Wo</div>
<div style="position:absolute;left:182px;top:642px;width:17px;height:16px;background:#fff"></div>
<svg style="position:absolute;left:183px;top:643px;overflow:visible" width="15" height="14"><defs><linearGradient id="g183_643" x1="0" y1="0" x2="1" y2="1"><stop offset="0" stop-color="#dde7fe"/><stop offset="1" stop-color="#b0c6f5"/></linearGradient></defs><rect x="0.5" y="0.5" width="14" height="13" rx="2" fill="url(#g183_643)" stroke="#c5d4f6"/><path d="M3.5 5.0l4 4l4-4" stroke="#4d6185" stroke-width="2" fill="none"/></svg>
<div style="position:absolute;left:6px;top:659px;width:194px;height:1px;border-top:1px dotted #9c9888"></div>
<div style="position:absolute;left:89px;top:660px;width:2px;height:18px;background:#aca899;border-right:1px solid #fff"></div>
<div style="position:absolute;left:36px;top:662px;white-space:nowrap;width:52px;overflow:hidden;">Standard F</div>
<div style="position:absolute;left:182px;top:661px;width:17px;height:16px;background:#fff"></div>
<svg style="position:absolute;left:183px;top:662px;overflow:visible" width="15" height="14"><defs><linearGradient id="g183_662" x1="0" y1="0" x2="1" y2="1"><stop offset="0" stop-color="#dde7fe"/><stop offset="1" stop-color="#b0c6f5"/></linearGradient></defs><rect x="0.5" y="0.5" width="14" height="13" rx="2" fill="url(#g183_662)" stroke="#c5d4f6"/><path d="M3.5 5.0l4 4l4-4" stroke="#4d6185" stroke-width="2" fill="none"/></svg>
<div style="position:absolute;left:6px;top:678px;width:194px;height:1px;border-top:1px dotted #9c9888"></div>
<div style="position:absolute;left:89px;top:679px;width:2px;height:18px;background:#aca899;border-right:1px solid #fff"></div>
<div style="position:absolute;left:36px;top:681px;white-space:nowrap;width:52px;overflow:hidden;">Actual Ove</div>
<div style="position:absolute;left:182px;top:680px;width:17px;height:16px;background:#fff"></div>
<svg style="position:absolute;left:183px;top:681px;overflow:visible" width="15" height="14"><defs><linearGradient id="g183_681" x1="0" y1="0" x2="1" y2="1"><stop offset="0" stop-color="#dde7fe"/><stop offset="1" stop-color="#b0c6f5"/></linearGradient></defs><rect x="0.5" y="0.5" width="14" height="13" rx="2" fill="url(#g183_681)" stroke="#c5d4f6"/><path d="M3.5 5.0l4 4l4-4" stroke="#4d6185" stroke-width="2" fill="none"/></svg>
<div style="position:absolute;left:6px;top:697px;width:194px;height:1px;border-top:1px dotted #9c9888"></div>
<div style="position:absolute;left:89px;top:698px;width:2px;height:18px;background:#aca899;border-right:1px solid #fff"></div>
<div style="position:absolute;left:36px;top:700px;white-space:nowrap;width:52px;overflow:hidden;">Overtime F</div>
<div style="position:absolute;left:182px;top:699px;width:17px;height:16px;background:#fff"></div>
<svg style="position:absolute;left:183px;top:700px;overflow:visible" width="15" height="14"><defs><linearGradient id="g183_700" x1="0" y1="0" x2="1" y2="1"><stop offset="0" stop-color="#dde7fe"/><stop offset="1" stop-color="#b0c6f5"/></linearGradient></defs><rect x="0.5" y="0.5" width="14" height="13" rx="2" fill="url(#g183_700)" stroke="#c5d4f6"/><path d="M3.5 5.0l4 4l4-4" stroke="#4d6185" stroke-width="2" fill="none"/></svg>
<div style="position:absolute;left:6px;top:716px;width:194px;height:1px;border-top:1px dotted #9c9888"></div>
<div style="position:absolute;left:89px;top:717px;width:2px;height:18px;background:#aca899;border-right:1px solid #fff"></div>
<div style="position:absolute;left:36px;top:719px;white-space:nowrap;width:52px;overflow:hidden;">Resource</div>
<div style="position:absolute;left:182px;top:718px;width:17px;height:16px;background:#fff"></div>
<svg style="position:absolute;left:183px;top:719px;overflow:visible" width="15" height="14"><defs><linearGradient id="g183_719" x1="0" y1="0" x2="1" y2="1"><stop offset="0" stop-color="#dde7fe"/><stop offset="1" stop-color="#b0c6f5"/></linearGradient></defs><rect x="0.5" y="0.5" width="14" height="13" rx="2" fill="url(#g183_719)" stroke="#c5d4f6"/><path d="M3.5 5.0l4 4l4-4" stroke="#4d6185" stroke-width="2" fill="none"/></svg>
<div style="position:absolute;left:221px;top:102px;width:1055px;height:39px;border:1px solid #aca899;background:#aca899"></div>
<div style="position:absolute;left:222px;top:103px;width:1053px;height:37px;border:1px solid #f6f4ea;background:#aca899"></div>
<div style="position:absolute;left:221px;top:141px;width:1055px;height:3px;background:#efedde"></div>
<svg style="position:absolute;left:229px;top:109px;overflow:visible" width="13" height="13"><rect x="0.5" y="0.5" width="12" height="12" fill="#f0efe8" stroke="#1c5180"/><path d="M3 6l2.5 3l4.5-5.5" stroke="#21a121" stroke-width="2" fill="none"/></svg>
<div style="position:absolute;left:244px;top:109px;white-space:nowrap;color:#fff;line-height:12px;">Current filter:</div>
<div style="position:absolute;left:368px;top:109px;white-space:nowrap;color:#fff;line-height:12px;">( (Development department))</div>
<div style="position:absolute;left:221px;top:144px;width:1055px;height:593px;border:1px solid #7f9db9;background:#fff"></div>
<div style="position:absolute;left:222px;top:145px;width:1053px;height:35px;background:#aca899"></div>
<div style="position:absolute;left:229px;top:157px;white-space:nowrap;color:#ebe9dc;letter-spacing:-0.08px;">Drag a column header here to group by that column</div>
<div style="position:absolute;left:222px;top:180px;width:1053px;height:19px;background:linear-gradient(#f1efe3,#ebe8d8);border-bottom:1px solid #d6d2c2"></div>
<div style="position:absolute;left:283px;top:183px;width:2px;height:13px;background:#c5c1ae;border-right:1px solid #fff"></div>
<div style="position:absolute;left:364px;top:183px;width:2px;height:13px;background:#c5c1ae;border-right:1px solid #fff"></div>
<div style="position:absolute;left:484px;top:183px;width:2px;height:13px;background:#c5c1ae;border-right:1px solid #fff"></div>
<div style="position:absolute;left:565px;top:183px;width:2px;height:13px;background:#c5c1ae;border-right:1px solid #fff"></div>
<div style="position:absolute;left:673px;top:183px;width:2px;height:13px;background:#c5c1ae;border-right:1px solid #fff"></div>
<div style="position:absolute;left:819px;top:183px;width:2px;height:13px;background:#c5c1ae;border-right:1px solid #fff"></div>
<div style="position:absolute;left:949px;top:183px;width:2px;height:13px;background:#c5c1ae;border-right:1px solid #fff"></div>
<div style="position:absolute;left:1122px;top:183px;width:2px;height:13px;background:#c5c1ae;border-right:1px solid #fff"></div>
<div style="position:absolute;left:1273px;top:183px;width:2px;height:13px;background:#c5c1ae;border-right:1px solid #fff"></div>
<div style="position:absolute;left:222px;top:184px;white-space:nowrap;width:62px;overflow:hidden;text-align:center;">ID</div>
<div style="position:absolute;left:285px;top:184px;white-space:nowrap;width:80px;overflow:hidden;text-align:center;">Name</div>
<div style="position:absolute;left:366px;top:184px;white-space:nowrap;width:88px;overflow:hidden;text-align:center;">Status</div>
<div style="position:absolute;left:486px;top:184px;white-space:nowrap;width:80px;overflow:hidden;text-align:center;">Complete</div>
<div style="position:absolute;left:567px;top:184px;white-space:nowrap;width:89px;overflow:hidden;text-align:center;">Priority</div>
<div style="position:absolute;left:675px;top:184px;white-space:nowrap;width:127px;overflow:hidden;text-align:center;">Start Date</div>
<div style="position:absolute;left:821px;top:184px;white-space:nowrap;width:112px;overflow:hidden;text-align:center;">Finish Date</div>
<div style="position:absolute;left:951px;top:184px;white-space:nowrap;width:154px;overflow:hidden;text-align:center;">Assigned</div>
<div style="position:absolute;left:1124px;top:184px;white-space:nowrap;width:132px;overflow:hidden;text-align:center;">Due Date</div>
<div style="position:absolute;left:467px;top:183px;width:15px;height:13px;background:#fff"></div>
<svg style="position:absolute;left:468px;top:184px;overflow:visible" width="13" height="11"><defs><linearGradient id="g468_184" x1="0" y1="0" x2="1" y2="1"><stop offset="0" stop-color="#dde7fe"/><stop offset="1" stop-color="#b0c6f5"/></linearGradient></defs><rect x="0.5" y="0.5" width="12" height="10" rx="2" fill="url(#g468_184)" stroke="#c5d4f6"/><path d="M2.5 3.5l4 4l4-4" stroke="#4d6185" stroke-width="2" fill="none"/></svg>
<div style="position:absolute;left:657px;top:183px;width:15px;height:13px;background:#fff"></div>
<svg style="position:absolute;left:658px;top:184px;overflow:visible" width="13" height="11"><defs><linearGradient id="g658_184" x1="0" y1="0" x2="1" y2="1"><stop offset="0" stop-color="#dde7fe"/><stop offset="1" stop-color="#b0c6f5"/></linearGradient></defs><rect x="0.5" y="0.5" width="12" height="10" rx="2" fill="url(#g658_184)" stroke="#c5d4f6"/><path d="M2.5 3.5l4 4l4-4" stroke="#4d6185" stroke-width="2" fill="none"/></svg>
<div style="position:absolute;left:803px;top:183px;width:15px;height:13px;background:#fff"></div>
<svg style="position:absolute;left:804px;top:184px;overflow:visible" width="13" height="11"><defs><linearGradient id="g804_184" x1="0" y1="0" x2="1" y2="1"><stop offset="0" stop-color="#dde7fe"/><stop offset="1" stop-color="#b0c6f5"/></linearGradient></defs><rect x="0.5" y="0.5" width="12" height="10" rx="2" fill="url(#g804_184)" stroke="#c5d4f6"/><path d="M2.5 3.5l4 4l4-4" stroke="#4d6185" stroke-width="2" fill="none"/></svg>
<div style="position:absolute;left:933px;top:183px;width:15px;height:13px;background:#fff"></div>
<svg style="position:absolute;left:934px;top:184px;overflow:visible" width="13" height="11"><defs><linearGradient id="g934_184" x1="0" y1="0" x2="1" y2="1"><stop offset="0" stop-color="#dde7fe"/><stop offset="1" stop-color="#b0c6f5"/></linearGradient></defs><rect x="0.5" y="0.5" width="12" height="10" rx="2" fill="url(#g934_184)" stroke="#c5d4f6"/><path d="M2.5 3.5l4 4l4-4" stroke="#4d6185" stroke-width="2" fill="none"/></svg>
<div style="position:absolute;left:1106px;top:183px;width:15px;height:13px;background:#fff"></div>
<svg style="position:absolute;left:1107px;top:184px;overflow:visible" width="13" height="11"><defs><linearGradient id="g1107_184" x1="0" y1="0" x2="1" y2="1"><stop offset="0" stop-color="#dde7fe"/><stop offset="1" stop-color="#b0c6f5"/></linearGradient></defs><rect x="0.5" y="0.5" width="12" height="10" rx="2" fill="url(#g1107_184)" stroke="#c5d4f6"/><path d="M2.5 3.5l4 4l4-4" stroke="#4d6185" stroke-width="2" fill="none"/></svg>
<div style="position:absolute;left:1257px;top:183px;width:15px;height:13px;background:#fff"></div>
<svg style="position:absolute;left:1258px;top:184px;overflow:visible" width="13" height="11"><defs><linearGradient id="g1258_184" x1="0" y1="0" x2="1" y2="1"><stop offset="0" stop-color="#dde7fe"/><stop offset="1" stop-color="#b0c6f5"/></linearGradient></defs><rect x="0.5" y="0.5" width="12" height="10" rx="2" fill="url(#g1258_184)" stroke="#c5d4f6"/><path d="M2.5 3.5l4 4l4-4" stroke="#4d6185" stroke-width="2" fill="none"/></svg>
<svg style="position:absolute;left:455px;top:185px;overflow:visible" width="7" height="7"><path d="M3.5 0.5l3 6h-6z" fill="none" stroke="#b0ad9e"/></svg>
<div style="position:absolute;left:222px;top:220px;width:1053px;height:1px;background:#bdb8a5"></div>
<div style="position:absolute;left:284px;top:199px;width:1px;height:21px;background:#bdb8a5"></div>
<div style="position:absolute;left:365px;top:199px;width:1px;height:21px;background:#bdb8a5"></div>
<div style="position:absolute;left:485px;top:199px;width:1px;height:21px;background:#bdb8a5"></div>
<div style="position:absolute;left:566px;top:199px;width:1px;height:21px;background:#bdb8a5"></div>
<div style="position:absolute;left:674px;top:199px;width:1px;height:21px;background:#bdb8a5"></div>
<div style="position:absolute;left:820px;top:199px;width:1px;height:21px;background:#bdb8a5"></div>
<div style="position:absolute;left:950px;top:199px;width:1px;height:21px;background:#bdb8a5"></div>
<div style="position:absolute;left:1123px;top:199px;width:1px;height:21px;background:#bdb8a5"></div>
<div style="position:absolute;left:1274px;top:199px;width:1px;height:21px;background:#bdb8a5"></div>
<div style="position:absolute;left:222px;top:204px;white-space:nowrap;width:60px;overflow:hidden;text-align:right;">34</div>
<div style="position:absolute;left:287px;top:204px;white-space:nowrap;">Task 12</div>
<div style="position:absolute;left:390px;top:204px;white-space:nowrap;">Dormant</div>
<div style="position:absolute;left:486px;top:204px;white-space:nowrap;width:80px;overflow:hidden;text-align:center;">0 %</div>
<svg style="position:absolute;left:569px;top:201px;overflow:visible" width="17" height="17"><defs><radialGradient id="gb" cx="0.5" cy="0.6" r="0.6"><stop offset="0" stop-color="#22ee22"/><stop offset="1" stop-color="#008800"/></radialGradient></defs><circle cx="8.5" cy="8.5" r="7.8" fill="url(#gb)" stroke="#0a6a0a" stroke-width="0.8"/><ellipse cx="8.5" cy="4.5" rx="5" ry="2.8" fill="#e8fce8" opacity="0.85"/></svg>
<div style="position:absolute;left:589px;top:204px;white-space:nowrap;">Normal</div>
<div style="position:absolute;left:675px;top:204px;white-space:nowrap;width:145px;overflow:hidden;text-align:center;">11/5/2010</div>
<div style="position:absolute;left:821px;top:204px;white-space:nowrap;width:129px;overflow:hidden;text-align:center;">11/13/2010</div>
<div style="position:absolute;left:953px;top:204px;white-space:nowrap;">Mary Lynn</div>
<div style="position:absolute;left:1124px;top:204px;white-space:nowrap;width:150px;overflow:hidden;text-align:center;">11/15/2010</div>
<div style="position:absolute;left:222px;top:242px;width:1053px;height:1px;background:#bdb8a5"></div>
<div style="position:absolute;left:284px;top:221px;width:1px;height:21px;background:#bdb8a5"></div>
<div style="position:absolute;left:365px;top:221px;width:1px;height:21px;background:#bdb8a5"></div>
<div style="position:absolute;left:485px;top:221px;width:1px;height:21px;background:#bdb8a5"></div>
<div style="position:absolute;left:566px;top:221px;width:1px;height:21px;background:#bdb8a5"></div>
<div style="position:absolute;left:674px;top:221px;width:1px;height:21px;background:#bdb8a5"></div>
<div style="position:absolute;left:820px;top:221px;width:1px;height:21px;background:#bdb8a5"></div>
<div style="position:absolute;left:950px;top:221px;width:1px;height:21px;background:#bdb8a5"></div>
<div style="position:absolute;left:1123px;top:221px;width:1px;height:21px;background:#bdb8a5"></div>
<div style="position:absolute;left:1274px;top:221px;width:1px;height:21px;background:#bdb8a5"></div>
<div style="position:absolute;left:222px;top:226px;white-space:nowrap;width:60px;overflow:hidden;text-align:right;">3</div>
<div style="position:absolute;left:287px;top:226px;white-space:nowrap;">Task 2</div>
<div style="position:absolute;left:390px;top:226px;white-space:nowrap;">Ready</div>
<div style="position:absolute;left:487px;top:223px;width:7px;height:17px;background:linear-gradient(#b4f0b4 0,#7ee27e 20%,#2cd42c 45%,#2ad22a 75%,#7ce47c 100%)"></div>
<div style="position:absolute;left:486px;top:226px;white-space:nowrap;width:80px;overflow:hidden;text-align:center;">10 %</div>
<div style="position:absolute;left:487px;top:226px;width:7px;overflow:hidden;white-space:nowrap;line-height:13px"><div style="width:80px;margin-left:-1px;text-align:center;color:#f010f0">10 %</div></div>
<svg style="position:absolute;left:569px;top:223px;overflow:visible" width="17" height="17"><rect x="0.5" y="0.5" width="16" height="16" rx="2" fill="#d80f2a" stroke="#8a0010"/><rect x="2" y="1.5" width="13" height="7" rx="1" fill="#f8a0a8" opacity="0.75"/><path d="M5 10l3.5-3.5l3.5 3.5" stroke="#fff" stroke-width="2" fill="none"/></svg>
<div style="position:absolute;left:589px;top:226px;white-space:nowrap;">High</div>
<div style="position:absolute;left:675px;top:226px;white-space:nowrap;width:145px;overflow:hidden;text-align:center;">11/11/2010 2:30 AM</div>
<div style="position:absolute;left:821px;top:226px;white-space:nowrap;width:129px;overflow:hidden;text-align:center;">11/11/2010 3:00 AM</div>
<div style="position:absolute;left:953px;top:226px;white-space:nowrap;"></div>
<div style="position:absolute;left:1124px;top:226px;white-space:nowrap;width:150px;overflow:hidden;text-align:center;"></div>
<div style="position:absolute;left:222px;top:264px;width:1053px;height:1px;background:#bdb8a5"></div>
<div style="position:absolute;left:284px;top:243px;width:1px;height:21px;background:#bdb8a5"></div>
<div style="position:absolute;left:365px;top:243px;width:1px;height:21px;background:#bdb8a5"></div>
<div style="position:absolute;left:485px;top:243px;width:1px;height:21px;background:#bdb8a5"></div>
<div style="position:absolute;left:566px;top:243px;width:1px;height:21px;background:#bdb8a5"></div>
<div style="position:absolute;left:674px;top:243px;width:1px;height:21px;background:#bdb8a5"></div>
<div style="position:absolute;left:820px;top:243px;width:1px;height:21px;background:#bdb8a5"></div>
<div style="position:absolute;left:950px;top:243px;width:1px;height:21px;background:#bdb8a5"></div>
<div style="position:absolute;left:1123px;top:243px;width:1px;height:21px;background:#bdb8a5"></div>
<div style="position:absolute;left:1274px;top:243px;width:1px;height:21px;background:#bdb8a5"></div>
<div style="position:absolute;left:222px;top:248px;white-space:nowrap;width:60px;overflow:hidden;text-align:right;">1</div>
<div style="position:absolute;left:287px;top:248px;white-space:nowrap;">Task 1</div>
<div style="position:absolute;left:390px;top:248px;white-space:nowrap;">Executing</div>
<div style="position:absolute;left:487px;top:245px;width:78px;height:17px;background:linear-gradient(#b4f0b4 0,#7ee27e 20%,#2cd42c 45%,#2ad22a 75%,#7ce47c 100%)"></div>
<div style="position:absolute;left:486px;top:248px;white-space:nowrap;width:80px;overflow:hidden;text-align:center;">100 %</div>
<div style="position:absolute;left:487px;top:248px;width:78px;overflow:hidden;white-space:nowrap;line-height:13px"><div style="width:80px;margin-left:-1px;text-align:center;color:#f010f0">100 %</div></div>
<svg style="position:absolute;left:569px;top:245px;overflow:visible" width="17" height="17"><path d="M8.5 0.5L16.5 8.5L8.5 16.5L0.5 8.5z" fill="#fbb818" stroke="#e07800"/><path d="M8.5 4v6" stroke="#000" stroke-width="2"/><rect x="7.5" y="11" width="2" height="2" fill="#000"/></svg>
<div style="position:absolute;left:589px;top:248px;white-space:nowrap;">Urgent</div>
<div style="position:absolute;left:675px;top:248px;white-space:nowrap;width:145px;overflow:hidden;text-align:center;">11/23/2010</div>
<div style="position:absolute;left:821px;top:248px;white-space:nowrap;width:129px;overflow:hidden;text-align:center;">12/1/2010</div>
<div style="position:absolute;left:953px;top:248px;white-space:nowrap;">Joseph Lewis</div>
<div style="position:absolute;left:1124px;top:248px;white-space:nowrap;width:150px;overflow:hidden;text-align:center;">11/30/2010</div>
<div style="position:absolute;left:222px;top:265px;width:1052px;height:21px;background:#316ac5;border:1px dotted #e0a040"></div>
<div style="position:absolute;left:222px;top:286px;width:1053px;height:1px;background:#bdb8a5"></div>
<div style="position:absolute;left:284px;top:265px;width:1px;height:21px;background:#bdb8a5"></div>
<div style="position:absolute;left:365px;top:265px;width:1px;height:21px;background:#bdb8a5"></div>
<div style="position:absolute;left:485px;top:265px;width:1px;height:21px;background:#bdb8a5"></div>
<div style="position:absolute;left:566px;top:265px;width:1px;height:21px;background:#bdb8a5"></div>
<div style="position:absolute;left:674px;top:265px;width:1px;height:21px;background:#bdb8a5"></div>
<div style="position:absolute;left:820px;top:265px;width:1px;height:21px;background:#bdb8a5"></div>
<div style="position:absolute;left:950px;top:265px;width:1px;height:21px;background:#bdb8a5"></div>
<div style="position:absolute;left:1123px;top:265px;width:1px;height:21px;background:#bdb8a5"></div>
<div style="position:absolute;left:1274px;top:265px;width:1px;height:21px;background:#bdb8a5"></div>
<div style="position:absolute;left:222px;top:270px;white-space:nowrap;color:#fff;width:60px;overflow:hidden;text-align:right;">9</div>
<div style="position:absolute;left:287px;top:270px;white-space:nowrap;color:#fff;">Task 9</div>
<div style="position:absolute;left:390px;top:270px;white-space:nowrap;color:#fff;">Executing</div>
<div style="position:absolute;left:487px;top:267px;width:62px;height:17px;background:linear-gradient(#b4f0b4 0,#7ee27e 20%,#2cd42c 45%,#2ad22a 75%,#7ce47c 100%)"></div>
<div style="position:absolute;left:486px;top:270px;white-space:nowrap;width:80px;overflow:hidden;text-align:center;">80 %</div>
<div style="position:absolute;left:487px;top:270px;width:62px;overflow:hidden;white-space:nowrap;line-height:13px"><div style="width:80px;margin-left:-1px;text-align:center;color:#f010f0">80 %</div></div>
<svg style="position:absolute;left:569px;top:267px;overflow:visible" width="17" height="17"><rect x="0.5" y="0.5" width="16" height="16" rx="2" fill="#d80f2a" stroke="#8a0010"/><rect x="2" y="1.5" width="13" height="7" rx="1" fill="#f8a0a8" opacity="0.75"/><path d="M5 10l3.5-3.5l3.5 3.5" stroke="#fff" stroke-width="2" fill="none"/></svg>
<div style="position:absolute;left:589px;top:270px;white-space:nowrap;color:#fff;">High</div>
<div style="position:absolute;left:675px;top:270px;white-space:nowrap;color:#fff;width:145px;overflow:hidden;text-align:center;">11/12/2010</div>
<div style="position:absolute;left:821px;top:270px;white-space:nowrap;color:#fff;width:129px;overflow:hidden;text-align:center;">11/20/2010</div>
<div style="position:absolute;left:953px;top:270px;white-space:nowrap;color:#fff;">David Elliot</div>
<div style="position:absolute;left:1124px;top:270px;white-space:nowrap;color:#fff;width:150px;overflow:hidden;text-align:center;">11/26/2010</div>
<div style="position:absolute;left:222px;top:308px;width:1053px;height:1px;background:#bdb8a5"></div>
<div style="position:absolute;left:284px;top:287px;width:1px;height:21px;background:#bdb8a5"></div>
<div style="position:absolute;left:365px;top:287px;width:1px;height:21px;background:#bdb8a5"></div>
<div style="position:absolute;left:485px;top:287px;width:1px;height:21px;background:#bdb8a5"></div>
<div style="position:absolute;left:566px;top:287px;width:1px;height:21px;background:#bdb8a5"></div>
<div style="position:absolute;left:674px;top:287px;width:1px;height:21px;background:#bdb8a5"></div>
<div style="position:absolute;left:820px;top:287px;width:1px;height:21px;background:#bdb8a5"></div>
<div style="position:absolute;left:950px;top:287px;width:1px;height:21px;background:#bdb8a5"></div>
<div style="position:absolute;left:1123px;top:287px;width:1px;height:21px;background:#bdb8a5"></div>
<div style="position:absolute;left:1274px;top:287px;width:1px;height:21px;background:#bdb8a5"></div>
<div style="position:absolute;left:222px;top:292px;white-space:nowrap;width:60px;overflow:hidden;text-align:right;">10</div>
<div style="position:absolute;left:287px;top:292px;white-space:nowrap;">Task 10</div>
<div style="position:absolute;left:390px;top:292px;white-space:nowrap;">Executing</div>
<div style="position:absolute;left:487px;top:289px;width:39px;height:17px;background:linear-gradient(#b4f0b4 0,#7ee27e 20%,#2cd42c 45%,#2ad22a 75%,#7ce47c 100%)"></div>
<div style="position:absolute;left:486px;top:292px;white-space:nowrap;width:80px;overflow:hidden;text-align:center;">50 %</div>
<div style="position:absolute;left:487px;top:292px;width:39px;overflow:hidden;white-space:nowrap;line-height:13px"><div style="width:80px;margin-left:-1px;text-align:center;color:#f010f0">50 %</div></div>
<svg style="position:absolute;left:569px;top:289px;overflow:visible" width="17" height="17"><defs><radialGradient id="gb" cx="0.5" cy="0.6" r="0.6"><stop offset="0" stop-color="#22ee22"/><stop offset="1" stop-color="#008800"/></radialGradient></defs><circle cx="8.5" cy="8.5" r="7.8" fill="url(#gb)" stroke="#0a6a0a" stroke-width="0.8"/><ellipse cx="8.5" cy="4.5" rx="5" ry="2.8" fill="#e8fce8" opacity="0.85"/></svg>
<div style="position:absolute;left:589px;top:292px;white-space:nowrap;">Normal</div>
<div style="position:absolute;left:675px;top:292px;white-space:nowrap;width:145px;overflow:hidden;text-align:center;">11/25/2010</div>
<div style="position:absolute;left:821px;top:292px;white-space:nowrap;width:129px;overflow:hidden;text-align:center;">11/30/2010</div>
<div style="position:absolute;left:953px;top:292px;white-space:nowrap;">Brian Moran</div>
<div style="position:absolute;left:1124px;top:292px;white-space:nowrap;width:150px;overflow:hidden;text-align:center;">11/30/2010</div>
<div style="position:absolute;left:222px;top:330px;width:1053px;height:1px;background:#bdb8a5"></div>
<div style="position:absolute;left:284px;top:309px;width:1px;height:21px;background:#bdb8a5"></div>
<div style="position:absolute;left:365px;top:309px;width:1px;height:21px;background:#bdb8a5"></div>
<div style="position:absolute;left:485px;top:309px;width:1px;height:21px;background:#bdb8a5"></div>
<div style="position:absolute;left:566px;top:309px;width:1px;height:21px;background:#bdb8a5"></div>
<div style="position:absolute;left:674px;top:309px;width:1px;height:21px;background:#bdb8a5"></div>
<div style="position:absolute;left:820px;top:309px;width:1px;height:21px;background:#bdb8a5"></div>
<div style="position:absolute;left:950px;top:309px;width:1px;height:21px;background:#bdb8a5"></div>
<div style="position:absolute;left:1123px;top:309px;width:1px;height:21px;background:#bdb8a5"></div>
<div style="position:absolute;left:1274px;top:309px;width:1px;height:21px;background:#bdb8a5"></div>
<div style="position:absolute;left:222px;top:314px;white-space:nowrap;width:60px;overflow:hidden;text-align:right;">32</div>
<div style="position:absolute;left:287px;top:314px;white-space:nowrap;">Task 11</div>
<div style="position:absolute;left:390px;top:314px;white-space:nowrap;">Executing</div>
<div style="position:absolute;left:487px;top:311px;width:15px;height:17px;background:linear-gradient(#b4f0b4 0,#7ee27e 20%,#2cd42c 45%,#2ad22a 75%,#7ce47c 100%)"></div>
<div style="position:absolute;left:486px;top:314px;white-space:nowrap;width:80px;overflow:hidden;text-align:center;">20 %</div>
<div style="position:absolute;left:487px;top:314px;width:15px;overflow:hidden;white-space:nowrap;line-height:13px"><div style="width:80px;margin-left:-1px;text-align:center;color:#f010f0">20 %</div></div>
<svg style="position:absolute;left:569px;top:311px;overflow:visible" width="17" height="17"><rect x="0.5" y="0.5" width="16" height="16" rx="2" fill="#2a8ef0" stroke="#1060c0"/><rect x="2" y="2" width="13" height="12" rx="1" fill="#fff"/><rect x="3" y="3" width="11" height="10" fill="#3a9af8"/><path d="M5 6.5l3.5 3.5l3.5-3.5" stroke="#fff" stroke-width="2" fill="none"/></svg>
<div style="position:absolute;left:589px;top:314px;white-space:nowrap;">Low</div>
<div style="position:absolute;left:675px;top:314px;white-space:nowrap;width:145px;overflow:hidden;text-align:center;">11/11/2010 1:00 AM</div>
<div style="position:absolute;left:821px;top:314px;white-space:nowrap;width:129px;overflow:hidden;text-align:center;">11/11/2010 1:30 AM</div>
<div style="position:absolute;left:953px;top:314px;white-space:nowrap;">Nancy Whitmer,Robert Green</div>
<div style="position:absolute;left:1124px;top:314px;white-space:nowrap;width:150px;overflow:hidden;text-align:center;">11/15/2010</div>
<div style="position:absolute;left:222px;top:352px;width:1053px;height:1px;background:#bdb8a5"></div>
<div style="position:absolute;left:284px;top:331px;width:1px;height:21px;background:#bdb8a5"></div>
<div style="position:absolute;left:365px;top:331px;width:1px;height:21px;background:#bdb8a5"></div>
<div style="position:absolute;left:485px;top:331px;width:1px;height:21px;background:#bdb8a5"></div>
<div style="position:absolute;left:566px;top:331px;width:1px;height:21px;background:#bdb8a5"></div>
<div style="position:absolute;left:674px;top:331px;width:1px;height:21px;background:#bdb8a5"></div>
<div style="position:absolute;left:820px;top:331px;width:1px;height:21px;background:#bdb8a5"></div>
<div style="position:absolute;left:950px;top:331px;width:1px;height:21px;background:#bdb8a5"></div>
<div style="position:absolute;left:1123px;top:331px;width:1px;height:21px;background:#bdb8a5"></div>
<div style="position:absolute;left:1274px;top:331px;width:1px;height:21px;background:#bdb8a5"></div>
<div style="position:absolute;left:222px;top:336px;white-space:nowrap;width:60px;overflow:hidden;text-align:right;">35</div>
<div style="position:absolute;left:287px;top:336px;white-space:nowrap;">Task 14</div>
<div style="position:absolute;left:390px;top:336px;white-space:nowrap;">Executing</div>
<div style="position:absolute;left:487px;top:333px;width:78px;height:17px;background:linear-gradient(#b4f0b4 0,#7ee27e 20%,#2cd42c 45%,#2ad22a 75%,#7ce47c 100%)"></div>
<div style="position:absolute;left:486px;top:336px;white-space:nowrap;width:80px;overflow:hidden;text-align:center;">100 %</div>
<div style="position:absolute;left:487px;top:336px;width:78px;overflow:hidden;white-space:nowrap;line-height:13px"><div style="width:80px;margin-left:-1px;text-align:center;color:#f010f0">100 %</div></div>
<svg style="position:absolute;left:569px;top:333px;overflow:visible" width="17" height="17"><defs><radialGradient id="gb" cx="0.5" cy="0.6" r="0.6"><stop offset="0" stop-color="#22ee22"/><stop offset="1" stop-color="#008800"/></radialGradient></defs><circle cx="8.5" cy="8.5" r="7.8" fill="url(#gb)" stroke="#0a6a0a" stroke-width="0.8"/><ellipse cx="8.5" cy="4.5" rx="5" ry="2.8" fill="#e8fce8" opacity="0.85"/></svg>
<div style="position:absolute;left:589px;top:336px;white-space:nowrap;">Normal</div>
<div style="position:absolute;left:675px;top:336px;white-space:nowrap;width:145px;overflow:hidden;text-align:center;">11/12/2010 12:00 AM</div>
<div style="position:absolute;left:821px;top:336px;white-space:nowrap;width:129px;overflow:hidden;text-align:center;">11/12/2010 12:30 AM</div>
<div style="position:absolute;left:953px;top:336px;white-space:nowrap;">Kevin Turner</div>
<div style="position:absolute;left:1124px;top:336px;white-space:nowrap;width:150px;overflow:hidden;text-align:center;">11/12/2010</div>
<div style="position:absolute;left:222px;top:374px;width:1053px;height:1px;background:#bdb8a5"></div>
<div style="position:absolute;left:284px;top:353px;width:1px;height:21px;background:#bdb8a5"></div>
<div style="position:absolute;left:365px;top:353px;width:1px;height:21px;background:#bdb8a5"></div>
<div style="position:absolute;left:485px;top:353px;width:1px;height:21px;background:#bdb8a5"></div>
<div style="position:absolute;left:566px;top:353px;width:1px;height:21px;background:#bdb8a5"></div>
<div style="position:absolute;left:674px;top:353px;width:1px;height:21px;background:#bdb8a5"></div>
<div style="position:absolute;left:820px;top:353px;width:1px;height:21px;background:#bdb8a5"></div>
<div style="position:absolute;left:950px;top:353px;width:1px;height:21px;background:#bdb8a5"></div>
<div style="position:absolute;left:1123px;top:353px;width:1px;height:21px;background:#bdb8a5"></div>
<div style="position:absolute;left:1274px;top:353px;width:1px;height:21px;background:#bdb8a5"></div>
<div style="position:absolute;left:222px;top:358px;white-space:nowrap;width:60px;overflow:hidden;text-align:right;">2</div>
<div style="position:absolute;left:287px;top:358px;white-space:nowrap;">Task 3</div>
<div style="position:absolute;left:390px;top:358px;white-space:nowrap;">Blocked</div>
<div style="position:absolute;left:487px;top:355px;width:39px;height:17px;background:linear-gradient(#b4f0b4 0,#7ee27e 20%,#2cd42c 45%,#2ad22a 75%,#7ce47c 100%)"></div>
<div style="position:absolute;left:486px;top:358px;white-space:nowrap;width:80px;overflow:hidden;text-align:center;">50 %</div>
<div style="position:absolute;left:487px;top:358px;width:39px;overflow:hidden;white-space:nowrap;line-height:13px"><div style="width:80px;margin-left:-1px;text-align:center;color:#f010f0">50 %</div></div>
<svg style="position:absolute;left:569px;top:355px;overflow:visible" width="17" height="17"><defs><radialGradient id="gb" cx="0.5" cy="0.6" r="0.6"><stop offset="0" stop-color="#22ee22"/><stop offset="1" stop-color="#008800"/></radialGradient></defs><circle cx="8.5" cy="8.5" r="7.8" fill="url(#gb)" stroke="#0a6a0a" stroke-width="0.8"/><ellipse cx="8.5" cy="4.5" rx="5" ry="2.8" fill="#e8fce8" opacity="0.85"/></svg>
<div style="position:absolute;left:589px;top:358px;white-space:nowrap;">Normal</div>
<div style="position:absolute;left:675px;top:358px;white-space:nowrap;width:145px;overflow:hidden;text-align:center;">11/16/2010</div>
<div style="position:absolute;left:821px;top:358px;white-space:nowrap;width:129px;overflow:hidden;text-align:center;">12/1/2010</div>
<div style="position:absolute;left:953px;top:358px;white-space:nowrap;">David Elliot</div>
<div style="position:absolute;left:1124px;top:358px;white-space:nowrap;width:150px;overflow:hidden;text-align:center;">12/3/2010</div>
<div style="position:absolute;left:222px;top:396px;width:1053px;height:1px;background:#bdb8a5"></div>
<div style="position:absolute;left:284px;top:375px;width:1px;height:21px;background:#bdb8a5"></div>
<div style="position:absolute;left:365px;top:375px;width:1px;height:21px;background:#bdb8a5"></div>
<div style="position:absolute;left:485px;top:375px;width:1px;height:21px;background:#bdb8a5"></div>
<div style="position:absolute;left:566px;top:375px;width:1px;height:21px;background:#bdb8a5"></div>
<div style="position:absolute;left:674px;top:375px;width:1px;height:21px;background:#bdb8a5"></div>
<div style="position:absolute;left:820px;top:375px;width:1px;height:21px;background:#bdb8a5"></div>
<div style="position:absolute;left:950px;top:375px;width:1px;height:21px;background:#bdb8a5"></div>
<div style="position:absolute;left:1123px;top:375px;width:1px;height:21px;background:#bdb8a5"></div>
<div style="position:absolute;left:1274px;top:375px;width:1px;height:21px;background:#bdb8a5"></div>
<div style="position:absolute;left:222px;top:380px;white-space:nowrap;width:60px;overflow:hidden;text-align:right;">33</div>
<div style="position:absolute;left:287px;top:380px;white-space:nowrap;">task 12</div>
<div style="position:absolute;left:390px;top:380px;white-space:nowrap;">Blocked</div>
<div style="position:absolute;left:486px;top:380px;white-space:nowrap;width:80px;overflow:hidden;text-align:center;">0 %</div>
<svg style="position:absolute;left:569px;top:377px;overflow:visible" width="17" height="17"><defs><radialGradient id="gb" cx="0.5" cy="0.6" r="0.6"><stop offset="0" stop-color="#22ee22"/><stop offset="1" stop-color="#008800"/></radialGradient></defs><circle cx="8.5" cy="8.5" r="7.8" fill="url(#gb)" stroke="#0a6a0a" stroke-width="0.8"/><ellipse cx="8.5" cy="4.5" rx="5" ry="2.8" fill="#e8fce8" opacity="0.85"/></svg>
<div style="position:absolute;left:589px;top:380px;white-space:nowrap;">Normal</div>
<div style="position:absolute;left:675px;top:380px;white-space:nowrap;width:145px;overflow:hidden;text-align:center;">11/10/2010</div>
<div style="position:absolute;left:821px;top:380px;white-space:nowrap;width:129px;overflow:hidden;text-align:center;">11/18/2010</div>
<div style="position:absolute;left:953px;top:380px;white-space:nowrap;">Graham Perry</div>
<div style="position:absolute;left:1124px;top:380px;white-space:nowrap;width:150px;overflow:hidden;text-align:center;">11/19/2010</div>
<div style="position:absolute;left:222px;top:398px;width:1053px;height:312px;background:#fff"></div>
<div style="position:absolute;left:222px;top:710px;width:1053px;height:25px;background:#ebe8d8;border-top:1px solid #aca899"></div>
<div style="position:absolute;left:222px;top:711px;width:1053px;height:1px;background:#fff"></div>
<div style="position:absolute;left:224px;top:713px;width:60px;height:21px;border:1px solid #aca899;border-right-color:#fff;border-bottom-color:#fff;border-radius:2px;background:#f1f0e9"></div>
<div style="position:absolute;left:224px;top:717px;white-space:nowrap;width:55px;overflow:hidden;text-align:right;">9</div>
<div style="position:absolute;left:364px;top:177px;width:123px;height:221px;border:2px solid #ff0000;filter:drop-shadow(4px 4px 3px rgba(0,0,0,0.42))"></div>
<div style="position:absolute;left:0px;top:737px;width:1280px;height:257px;background:#f3f2ec"></div>
<div style="position:absolute;left:0px;top:737px;width:1280px;height:1px;background:#fff"></div>
<div style="position:absolute;left:0px;top:738px;width:1280px;height:1px;background:#8a9292"></div>
<div style="position:absolute;left:0px;top:739px;width:1280px;height:3px;background:#e5e2d2"></div>
<div style="position:absolute;left:0px;top:742px;width:1280px;height:2px;background:#f8f8f4"></div>
<div style="position:absolute;left:3px;top:744px;width:1275px;height:21px;border-bottom:1px solid #d0ccb8;border-radius:5px 5px 0 0;background:#d6dff7"></div>
<div style="position:absolute;left:7px;top:747px;white-space:nowrap;">Task history</div>
<svg style="position:absolute;left:1246px;top:748px;overflow:visible" width="11" height="13"><path d="M2.5 0.8h6l-1 1.2v3l2.5 1.8h-9l2.5-1.8v-3z" fill="#dfe8fc" stroke="#1846b8" stroke-width="1.3" stroke-linejoin="round"/><path d="M5.5 7v5" stroke="#1846b8" stroke-width="1.6"/><rect x="4.5" y="2" width="2" height="3" fill="#5aa0f0"/></svg>
<svg style="position:absolute;left:1261px;top:748px;overflow:visible" width="12" height="12"><defs><linearGradient id="cl1261748" x1="0" y1="0" x2="1" y2="1"><stop offset="0" stop-color="#f07a5c"/><stop offset="1" stop-color="#d4380f"/></linearGradient></defs><rect x="0" y="0" width="12" height="12" rx="1.5" fill="url(#cl1261748)"/><path d="M3 3L9 9M9 3L3 9" stroke="#fff" stroke-width="2"/></svg>
<div style="position:absolute;left:3px;top:765px;width:1275px;height:30px;background:linear-gradient(rgba(255,255,255,0.5),rgba(255,255,255,0) 60%,rgba(0,0,0,0.02)),linear-gradient(90deg,#f4f3ee,#ebe8d4);border-bottom:1px solid #d0ccb8"></div>
<div style="position:absolute;left:3px;top:795px;width:1275px;height:2px;background:#fff"></div>
<svg style="position:absolute;left:6px;top:772px;overflow:visible" width="3" height="20"><rect x="0" y="0" width="2" height="2" fill="#a8a698"/><rect x="0" y="4" width="2" height="2" fill="#a8a698"/><rect x="0" y="8" width="2" height="2" fill="#a8a698"/><rect x="0" y="12" width="2" height="2" fill="#a8a698"/><rect x="0" y="16" width="2" height="2" fill="#a8a698"/></svg>
<svg style="position:absolute;left:15px;top:772px;overflow:visible" width="18" height="18"><rect x="4" y="2" width="10" height="6" fill="#fff" stroke="#999"/><rect x="1.5" y="7.5" width="15" height="7" rx="2" fill="#c8cee0" stroke="#777"/><rect x="4" y="9" width="10" height="3" fill="#555"/><rect x="3" y="14" width="12" height="2" fill="#aaa"/></svg>
<svg style="position:absolute;left:39px;top:772px;overflow:visible" width="18" height="18"><rect x="7.5" y="1.5" width="9" height="12" fill="#eee" stroke="#ccc"/><rect x="1.5" y="8.5" width="12" height="6" rx="2" fill="#c8cee0" stroke="#888"/><rect x="3" y="10" width="9" height="2" fill="#666"/></svg>
<div style="position:absolute;left:62px;top:770px;width:2px;height:22px;background:#c5c2b2;border-right:1px solid #fff"></div>
<div style="position:absolute;left:67px;top:768px;width:24px;height:25px;border:1px solid #7f9db9;border-radius:3px;background:#fff"></div>
<svg style="position:absolute;left:70px;top:772px;overflow:visible" width="18" height="18"><path d="M5 16V5M2 8l3-4l3 4" stroke="#f08c18" stroke-width="2.2" fill="none"/><path d="M10 5h1M10 8h3M10 11h5M10 14h6" stroke="#109010" stroke-width="1.8"/></svg>
<svg style="position:absolute;left:95px;top:772px;overflow:visible" width="18" height="18"><path d="M5 2v11M2 10l3 4l3-4" stroke="#f0a040" stroke-width="2" fill="none"/><path d="M10 3h7M10 6h5M10 9h3M10 12h1" stroke="#40a040" stroke-width="1.6"/></svg>
<div style="position:absolute;left:118px;top:770px;width:2px;height:22px;background:#c5c2b2;border-right:1px solid #fff"></div>
<svg style="position:absolute;left:125px;top:772px;overflow:visible" width="18" height="18"><rect x="0.5" y="0.5" width="15" height="15" fill="#f4f4f4" stroke="#d0d0d0"/><path d="M0.5 3h15" stroke="#d8d8d8"/><path d="M10.5 0.5v15M13 0.5v15" stroke="#d0d0d0"/><path d="M2 6.5h1.5M2 8.5h1.5M2 10.5h1.5M2 12.5h1.5" stroke="#555"/><path d="M4.5 6.5h3.5M4.5 8.5h3.5M4.5 10.5h3.5M4.5 12.5h3.5" stroke="#666"/></svg>
<svg style="position:absolute;left:145px;top:779px;overflow:visible" width="6" height="4"><path d="M0 0h5l-2.5 3z" fill="#000"/></svg>
<svg style="position:absolute;left:158px;top:772px;overflow:visible" width="18" height="18"><circle cx="8" cy="5" r="3.5" fill="#d8d8d8" stroke="#bbb"/><path d="M2 16c0-5 3-7 6-7s6 2 6 7z" fill="#d0d0d0" stroke="#bbb"/></svg>
<svg style="position:absolute;left:178px;top:779px;overflow:visible" width="6" height="4"><path d="M0 0h5l-2.5 3z" fill="#b0b0b0"/></svg>
<div style="position:absolute;left:188px;top:771px;width:100px;height:19px;background:#fff"></div>
<div style="position:absolute;left:191px;top:774px;white-space:nowrap;">All</div>
<svg style="position:absolute;left:273px;top:772px;overflow:visible" width="14" height="17"><defs><linearGradient id="g273_772" x1="0" y1="0" x2="1" y2="1"><stop offset="0" stop-color="#dde7fe"/><stop offset="1" stop-color="#b0c6f5"/></linearGradient></defs><rect x="0.5" y="0.5" width="13" height="16" rx="2" fill="url(#g273_772)" stroke="#c5d4f6"/><path d="M3.0 6.5l4 4l4-4" stroke="#4d6185" stroke-width="2" fill="none"/></svg>
<svg style="position:absolute;left:292px;top:772px;overflow:visible" width="17" height="17"><g opacity="1.0"><path d="M0.5 2.5L6.5 9.5V16.5H9.5V9.5L15.5 2.5z" fill="url(#ggray)" stroke="#b8b8b8" stroke-width="0.6"/><ellipse cx="8" cy="2.6" rx="7.6" ry="1.8" fill="#d4d4d4" stroke="#a8a8a8" stroke-width="0.6"/></g><rect x="7" y="10" width="8" height="5" rx="2" transform="rotate(-40 11 12.5)" fill="#ececec" stroke="#b8b8b8"/></svg>
<svg style="position:absolute;left:314px;top:785px;overflow:visible" width="6" height="4"><path d="M0 0h5l-2.5 3z" fill="#000"/></svg>
<div style="position:absolute;left:4px;top:797px;width:1273px;height:15px;background:#aca899"></div>
<div style="position:absolute;left:4px;top:812px;width:1273px;height:2px;background:#fdfdf8"></div>
<div style="position:absolute;left:7px;top:797px;white-space:nowrap;font-family:'Liberation Serif',serif;font-weight:bold;font-size:13px;line-height:16px;letter-spacing:0.2px;">Task: #9 - 'Task 9'</div>
<div style="position:absolute;left:3px;top:814px;width:1274px;height:99px;border:1px solid #7f9db9;border-top:1px solid #6e6a5a;background:#ece9d8"></div>
<div style="position:absolute;left:4px;top:815px;width:1272px;height:1px;background:#7f9db9"></div>
<div style="position:absolute;left:5px;top:817px;width:1254px;height:18px;background:#ece9d8;border-bottom:1px solid #c8c4b0"></div>
<div style="position:absolute;left:7px;top:820px;white-space:nowrap;font-weight:bold;letter-spacing:0.65px;">'Administrator' at 10/29/2010 3:12 PM</div>
<div style="position:absolute;left:20px;top:835px;width:1239px;height:18px;background:#fff;border-bottom:1px solid #c8c4b0;border-left:1px solid #c8c4b0"></div>
<div style="position:absolute;left:22px;top:838px;white-space:nowrap;">New Assignments: David Elliot</div>
<div style="position:absolute;left:20px;top:853px;width:1239px;height:18px;background:#fff;border-bottom:1px solid #c8c4b0;border-left:1px solid #c8c4b0"></div>
<div style="position:absolute;left:22px;top:856px;white-space:nowrap;">Task has been created</div>
<div style="position:absolute;left:5px;top:871px;width:1254px;height:18px;background:#ece9d8;border-bottom:1px solid #c8c4b0"></div>
<div style="position:absolute;left:7px;top:874px;white-space:nowrap;font-weight:bold;letter-spacing:0.65px;">'Administrator' at 10/29/2010 3:12 PM</div>
<div style="position:absolute;left:20px;top:889px;width:1239px;height:18px;background:#fff;border-bottom:1px solid #c8c4b0;border-left:1px solid #c8c4b0"></div>
<div style="position:absolute;left:22px;top:892px;white-space:nowrap;">Due date: - -> 10/28/2010</div>
<div style="position:absolute;left:5px;top:907px;width:1254px;height:18px;background:#ece9d8;border-bottom:1px solid #c8c4b0"></div>
<div style="position:absolute;left:7px;top:910px;white-space:nowrap;font-weight:bold;letter-spacing:0.65px;">'Administrator' at 10/29/2010 3:12 PM</div>
<div style="position:absolute;left:1259px;top:817px;width:17px;height:95px;background:#fcfcfe;border-left:1px solid #7f9db9"></div>
<svg style="position:absolute;left:1261px;top:817px;overflow:visible" width="14" height="14"><defs><linearGradient id="g1261_817" x1="0" y1="0" x2="1" y2="1"><stop offset="0" stop-color="#dde7fe"/><stop offset="1" stop-color="#b0c6f5"/></linearGradient></defs><rect x="0.5" y="0.5" width="13" height="13" rx="2" fill="url(#g1261_817)" stroke="#c5d4f6"/><path d="M3.0 9.0l4-4l4 4" stroke="#4d6185" stroke-width="2" fill="none"/></svg>
<div style="position:absolute;left:1261px;top:832px;width:14px;height:12px;border:1px solid #b6c8f2;border-radius:2px;background:linear-gradient(90deg,#c8d6fb,#b9cbf7)"></div>
<svg style="position:absolute;left:1261px;top:896px;overflow:visible" width="14" height="14"><defs><linearGradient id="g1261_896" x1="0" y1="0" x2="1" y2="1"><stop offset="0" stop-color="#dde7fe"/><stop offset="1" stop-color="#b0c6f5"/></linearGradient></defs><rect x="0.5" y="0.5" width="13" height="13" rx="2" fill="url(#g1261_896)" stroke="#c5d4f6"/><path d="M3.0 5.0l4 4l4-4" stroke="#4d6185" stroke-width="2" fill="none"/></svg>
<div style="position:absolute;left:3px;top:912px;width:1274px;height:7px;background:linear-gradient(#fdfdfb,#f0efe8);border-bottom:1px solid #94a6bc"></div>
<div style="position:absolute;left:0px;top:919px;width:1280px;height:25px;background:#f3f2ec"></div>
<div style="position:absolute;left:7px;top:919px;width:60px;height:23px;background:linear-gradient(#fcfcfc,#f4f4f0);border:1px solid #94a6bc;border-top:none;border-radius:0 0 3px 3px"></div>
<svg style="position:absolute;left:10px;top:922px;overflow:visible" width="18" height="18"><rect x="2" y="6" width="11" height="10" fill="#f8eeb8" stroke="#d8c880"/><circle cx="12" cy="5" r="4" fill="#c8ccd8" stroke="#8890a8"/><path d="M9 8l-6 6" stroke="#8890a8" stroke-width="1.6"/></svg>
<div style="position:absolute;left:31px;top:924px;white-space:nowrap;">Notes</div>
<div style="position:absolute;left:67px;top:919px;width:80px;height:23px;background:linear-gradient(#fcfcfc,#f4f4f0);border:1px solid #94a6bc;border-top:none;border-radius:0 0 3px 3px"></div>
<svg style="position:absolute;left:70px;top:922px;overflow:visible" width="18" height="18"><circle cx="5" cy="4" r="3.5" fill="#c8ccd8" stroke="#8890a8"/><rect x="1" y="9" width="8" height="8" rx="2" fill="#b8bcd0"/><rect x="8" y="2" width="8" height="13" fill="#eee" stroke="#bbb"/><path d="M10 5h5M10 8h5M10 11h4" stroke="#555"/></svg>
<div style="position:absolute;left:91px;top:924px;white-space:nowrap;">Comments</div>
<div style="position:absolute;left:237px;top:919px;width:90px;height:23px;background:linear-gradient(#fcfcfc,#f4f4f0);border:1px solid #94a6bc;border-top:none;border-radius:0 0 3px 3px"></div>
<svg style="position:absolute;left:240px;top:922px;overflow:visible" width="18" height="18"><path d="M3 7h10v10h-10z" fill="#f8d44c" stroke="#d0a020"/><path d="M7 12v-9a3 3 0 0 1 6 0v9" stroke="#8890a8" stroke-width="1.3" fill="none"/></svg>
<div style="position:absolute;left:260px;top:924px;white-space:nowrap;">Attachments</div>
<div style="position:absolute;left:328px;top:919px;width:134px;height:23px;background:linear-gradient(#fcfcfc,#f4f4f0);border:1px solid #94a6bc;border-top:none;border-radius:0 0 3px 3px"></div>
<svg style="position:absolute;left:331px;top:922px;overflow:visible" width="18" height="18"><circle cx="8" cy="5" r="4" fill="#c8ccdc" stroke="#8890a8"/><path d="M2 17c0-5 3-7 6-7s6 2 6 7z" fill="#b8bcd4" stroke="#8890a8"/></svg>
<div style="position:absolute;left:351px;top:924px;white-space:nowrap;">Resource Assignment</div>
<div style="position:absolute;left:147px;top:919px;width:89px;height:23px;background:linear-gradient(#fcfcfc,#f4f4f0);border:1px solid #94a6bc;border-top:none;border-radius:0 0 3px 3px"></div>
<div style="position:absolute;left:147px;top:940px;width:89px;height:2px;background:#f8a838;border-radius:0 0 3px 3px"></div>
<svg style="position:absolute;left:150px;top:922px;overflow:visible" width="18" height="18"><path d="M7 1h9l-3 8l3 8h-9l3-8z" fill="#e8e8f0" stroke="#8890a8"/><circle cx="6" cy="12" r="5.7" fill="#e4e6ee" stroke="#a4a8bc" stroke-width="0.9"/><circle cx="6" cy="12" r="3.7" fill="#222"/><path d="M5.7 9.4V12.3H8.2" stroke="#fff" stroke-width="1.2" fill="none"/></svg>
<div style="position:absolute;left:172px;top:924px;white-space:nowrap;">Task history</div>
<div style="position:absolute;left:1278px;top:765px;width:1px;height:180px;background:#b4b2a4"></div>
<div style="position:absolute;left:0px;top:944px;width:1280px;height:31px;background:linear-gradient(#f9f9f7,#eeede6 60%,#e8e6da);border-top:1px solid #d8d5c5"></div>
<div style="position:absolute;left:4px;top:948px;width:114px;height:25px;border:1px solid #94a6bc;border-bottom:none;border-radius:3px 3px 0 0;background:linear-gradient(#fdfdfb,#f0efe8)"></div>
<div style="position:absolute;left:93px;top:948px;width:1px;height:25px;background:#a8a594"></div>
<svg style="position:absolute;left:8px;top:951px;overflow:visible" width="18" height="18"><path d="M1 7l8-5l8 5v9h-16z" fill="#eef0f8" stroke="#8890b0"/><path d="M4 7h10v5h-10z" fill="#f4e890"/><path d="M1 16l8-6l8 6" stroke="#a8b0c8" fill="none"/></svg>
<div style="position:absolute;left:31px;top:954px;white-space:nowrap;">Notifications</div>
<svg style="position:absolute;left:97px;top:951px;overflow:visible" width="18" height="18"><circle cx="12" cy="6" r="4.5" fill="#d8dce8" stroke="#8890a8" stroke-width="1.4"/><path d="M9 9l-7 7M4 14l2 2M6 12l2 2" stroke="#8890a8" stroke-width="1.6"/></svg>
<div style="position:absolute;left:122px;top:948px;width:61px;height:25px;border:1px solid #94a6bc;border-bottom:none;border-radius:3px 3px 0 0;background:linear-gradient(#fdfdfb,#f0efe8)"></div>
<svg style="position:absolute;left:126px;top:951px;overflow:visible" width="18" height="18"><rect x="1.5" y="2.5" width="15" height="13" fill="#fff" stroke="#2050b0" stroke-width="1.4"/><rect x="1.5" y="2.5" width="15" height="3" fill="#3060c0"/><circle cx="9" cy="10" r="4.5" fill="#e84030"/><path d="M9 10V5.5A4.5 4.5 0 0 1 13.5 10z" fill="#40b040"/><path d="M9 10h4.5A4.5 4.5 0 0 1 9 14.5z" fill="#4060e0"/></svg>
<div style="position:absolute;left:149px;top:954px;white-space:nowrap;">Charts</div>
<div style="position:absolute;left:0px;top:975px;width:1280px;height:19px;background:linear-gradient(#ebe8d8,#e6e3d2)"></div>
<div style="position:absolute;left:0px;top:974px;width:1280px;height:1px;background:#c6c3b3"></div>
<svg style="position:absolute;left:4px;top:980px;overflow:visible" width="18" height="10"><path d="M0.5 0.5h17v8h-17z" fill="#8a8a8a" stroke="#6a6a6a"/><path d="M1 1l4 4l-4 4" fill="#bbb"/></svg>
<div style="position:absolute;left:28px;top:977px;width:2px;height:17px;background:#c6c3b3;border-right:1px solid #fff"></div>
<div style="position:absolute;left:235px;top:976px;width:102px;height:18px;border:1px solid #8a8a80;border-radius:3px;background:#fff"></div>
<div style="position:absolute;left:235px;top:979px;white-space:nowrap;width:102px;overflow:hidden;text-align:center;">0 %</div>
<div style="position:absolute;left:338px;top:977px;width:2px;height:17px;background:#c6c3b3;border-right:1px solid #fff"></div>
<div style="position:absolute;left:403px;top:977px;width:2px;height:17px;background:#c6c3b3;border-right:1px solid #fff"></div>
</body></html>
